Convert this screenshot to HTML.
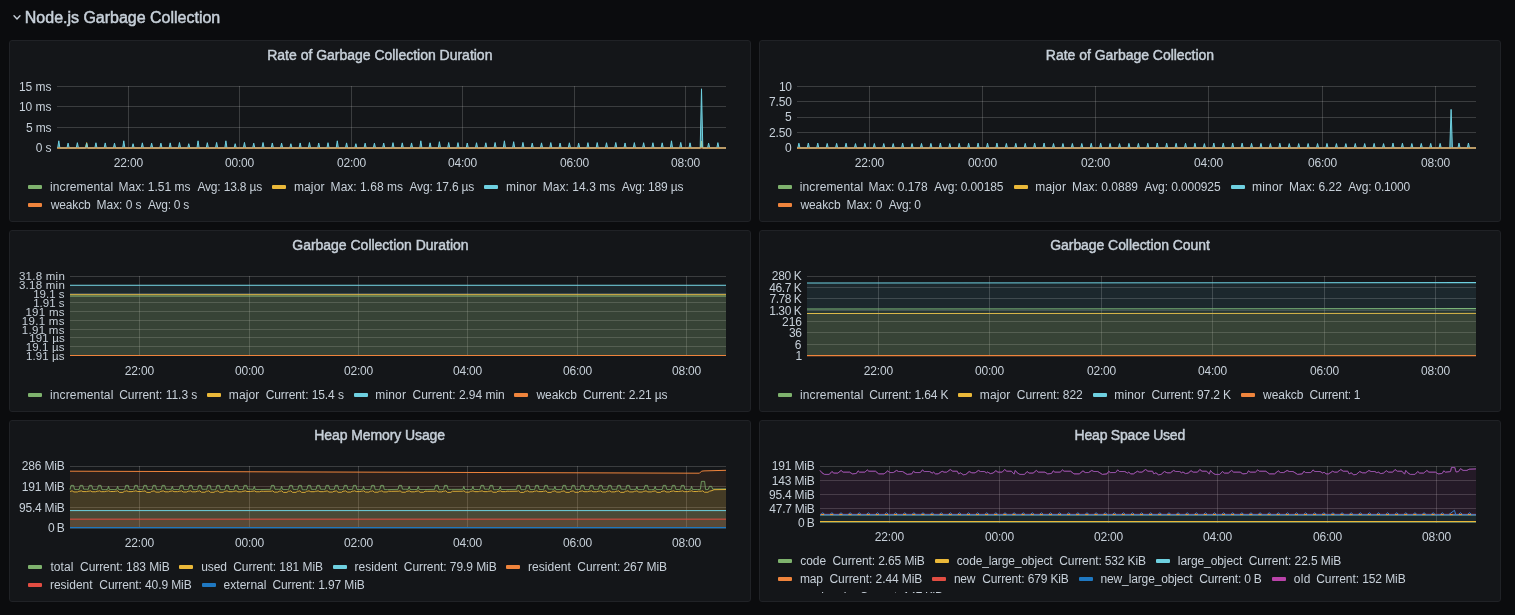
<!DOCTYPE html><html lang="en"><head><meta charset="utf-8"><title>Node.js Garbage Collection</title><style>
html,body{margin:0;padding:0}
body{width:1515px;height:615px;background:#0b0c0e;position:relative;overflow:hidden;font-family:"Liberation Sans",Arial,sans-serif;color:#c7d0d9}
.row{position:absolute;left:0;top:0;width:1515px;height:36px;will-change:transform}
.panel{position:absolute;box-sizing:border-box;width:742px;height:182px;background:#141619;border:1px solid #202226;border-radius:3px;will-change:transform}
.t,.ts,.h,.rt{position:absolute;white-space:pre;display:block;margin:0;font-weight:400}
.t{font-size:12px;line-height:12px;height:12px}
.ts{font-size:11.5px;line-height:12px;height:12px}
.h{font-size:14px;line-height:14px;height:14px;-webkit-text-stroke:0.45px #c7d0d9}
.rt{font-size:16px;line-height:16px;height:16px;-webkit-text-stroke:0.5px #c7d0d9}
.ic{position:absolute;width:14px;height:4px;border-radius:1px}
svg{position:absolute;left:0;top:0;overflow:hidden}
.axis,.legend,.series{display:contents}
.clip{position:absolute;left:0;top:165px;width:740px;height:6.6px;overflow:hidden}
</style></head><body>
<div class="row"><svg width="30" height="36" viewBox="0 0 30 36"><polyline points="14,15.8 17,18.9 20,15.8" fill="none" stroke="#c7d0d9" stroke-width="1.4" stroke-linecap="round" stroke-linejoin="round"/></svg><div class="rt" style="left:24.83px;top:9.66px;letter-spacing:-0.011px">Node.js Garbage Collection</div></div>
<section class="panel" style="left:9px;top:40px">
<h2 class="h" style="left:257.25px;top:7.35px;letter-spacing:-0.015px">Rate of Garbage Collection Duration</h2>
<svg class="plot" width="740" height="180" viewBox="10 41 740 180">
<rect x="57" y="86" width="669" height="1" fill="rgba(200,200,200,0.22)"/>
<rect x="57" y="106" width="669" height="1" fill="rgba(200,200,200,0.22)"/>
<rect x="57" y="127" width="669" height="1" fill="rgba(200,200,200,0.22)"/>
<rect x="57" y="147" width="669" height="1" fill="rgba(200,200,200,0.22)"/>
<rect x="128" y="86" width="1" height="62" fill="rgba(200,200,200,0.22)"/>
<rect x="239" y="86" width="1" height="62" fill="rgba(200,200,200,0.22)"/>
<rect x="351" y="86" width="1" height="62" fill="rgba(200,200,200,0.22)"/>
<rect x="462" y="86" width="1" height="62" fill="rgba(200,200,200,0.22)"/>
<rect x="574" y="86" width="1" height="62" fill="rgba(200,200,200,0.22)"/>
<rect x="685" y="86" width="1" height="62" fill="rgba(200,200,200,0.22)"/>
<polygon points="57.30,148.00 700.40,148.00 701.50,141.80 701.50,141.80 702.60,148.00 726.00,148.00 726.00,148.00 57.30,148.00" fill="#7EB26D" fill-opacity="0.6"/>
<polyline points="57.30,148.00 700.40,148.00 701.50,141.80 701.50,141.80 702.60,148.00 726.00,148.00" fill="none" stroke="#7EB26D" stroke-width="1" stroke-linejoin="round"/>
<polygon points="57.30,148.00 85.55,148.00 86.65,142.60 86.65,142.60 87.75,148.00 700.40,148.00 701.50,141.10 701.50,141.10 702.60,148.00 726.00,148.00 726.00,148.00 57.30,148.00" fill="#EAB839" fill-opacity="0.6"/>
<polyline points="57.30,148.00 85.55,148.00 86.65,142.60 86.65,142.60 87.75,148.00 700.40,148.00 701.50,141.10 701.50,141.10 702.60,148.00 726.00,148.00" fill="none" stroke="#EAB839" stroke-width="1" stroke-linejoin="round"/>
<polygon points="57.30,148.00 57.70,148.00 58.80,140.80 58.80,140.80 59.90,148.00 66.98,148.00 68.08,143.08 68.08,143.08 69.18,148.00 76.27,148.00 77.37,142.68 77.37,142.68 78.47,148.00 85.55,148.00 86.65,143.14 86.65,143.14 87.75,148.00 94.83,148.00 95.93,142.77 95.93,142.77 97.03,148.00 104.12,148.00 105.22,142.91 105.22,142.91 106.31,148.00 113.40,148.00 114.50,143.15 114.50,143.15 115.60,148.00 122.68,148.00 123.78,140.80 123.78,140.80 124.88,148.00 131.96,148.00 133.06,143.70 133.06,143.70 134.16,148.00 141.25,148.00 142.35,142.85 142.35,142.85 143.45,148.00 150.53,148.00 151.63,143.14 151.63,143.14 152.73,148.00 159.81,148.00 160.91,143.13 160.91,143.13 162.01,148.00 169.10,148.00 170.20,142.86 170.20,142.86 171.30,148.00 178.38,148.00 179.48,142.54 179.48,142.54 180.58,148.00 187.66,148.00 188.76,143.70 188.76,143.70 189.86,148.00 196.95,148.00 198.05,140.80 198.05,140.80 199.15,148.00 206.23,148.00 207.33,142.70 207.33,142.70 208.43,148.00 215.51,148.00 216.61,142.44 216.61,142.44 217.71,148.00 224.79,148.00 225.89,140.80 225.89,140.80 226.99,148.00 234.08,148.00 235.18,143.70 235.18,143.70 236.28,148.00 243.36,148.00 244.46,142.42 244.46,142.42 245.56,148.00 252.64,148.00 253.74,143.16 253.74,143.16 254.84,148.00 261.93,148.00 263.03,142.51 263.03,142.51 264.13,148.00 271.21,148.00 272.31,142.97 272.31,142.97 273.41,148.00 280.49,148.00 281.59,143.08 281.59,143.08 282.69,148.00 289.77,148.00 290.88,143.70 290.88,143.70 291.98,148.00 299.06,148.00 300.16,142.95 300.16,142.95 301.26,148.00 308.34,148.00 309.44,142.55 309.44,142.55 310.54,148.00 317.62,148.00 318.72,143.06 318.72,143.06 319.82,148.00 326.91,148.00 328.01,142.73 328.01,142.73 329.11,148.00 336.19,148.00 337.29,140.80 337.29,140.80 338.39,148.00 345.47,148.00 346.57,142.90 346.57,142.90 347.67,148.00 354.76,148.00 355.86,143.70 355.86,143.70 356.96,148.00 364.04,148.00 365.14,143.15 365.14,143.15 366.24,148.00 373.32,148.00 374.42,143.15 374.42,143.15 375.52,148.00 382.60,148.00 383.70,143.04 383.70,143.04 384.81,148.00 391.89,148.00 392.99,142.66 392.99,142.66 394.09,148.00 401.17,148.00 402.27,142.86 402.27,142.86 403.37,148.00 410.45,148.00 411.55,142.95 411.55,142.95 412.65,148.00 419.74,148.00 420.84,140.80 420.84,140.80 421.94,148.00 429.02,148.00 430.12,142.84 430.12,142.84 431.22,148.00 438.30,148.00 439.40,141.70 439.40,141.70 440.50,148.00 447.59,148.00 448.69,142.56 448.69,142.56 449.79,148.00 456.87,148.00 457.97,142.64 457.97,142.64 459.07,148.00 466.15,148.00 467.25,143.00 467.25,143.00 468.35,148.00 475.43,148.00 476.53,142.74 476.53,142.74 477.63,148.00 484.72,148.00 485.82,142.78 485.82,142.78 486.92,148.00 494.00,148.00 495.10,142.50 495.10,142.50 496.20,148.00 503.28,148.00 504.38,140.80 504.38,140.80 505.48,148.00 512.57,148.00 513.67,141.70 513.67,141.70 514.77,148.00 521.85,148.00 522.95,142.42 522.95,142.42 524.05,148.00 531.13,148.00 532.23,143.11 532.23,143.11 533.33,148.00 540.42,148.00 541.52,142.87 541.52,142.87 542.62,148.00 549.70,148.00 550.80,142.59 550.80,142.59 551.90,148.00 558.98,148.00 560.08,143.08 560.08,143.08 561.18,148.00 568.26,148.00 569.37,142.81 569.37,142.81 570.47,148.00 577.55,148.00 578.65,143.17 578.65,143.17 579.75,148.00 586.83,148.00 587.93,142.67 587.93,142.67 589.03,148.00 596.11,148.00 597.21,142.59 597.21,142.59 598.31,148.00 605.40,148.00 606.50,142.74 606.50,142.74 607.60,148.00 614.68,148.00 615.78,142.50 615.78,142.50 616.88,148.00 623.96,148.00 625.06,142.95 625.06,142.95 626.16,148.00 633.25,148.00 634.35,142.64 634.35,142.64 635.45,148.00 642.53,148.00 643.63,142.72 643.63,142.72 644.73,148.00 651.81,148.00 652.91,142.74 652.91,142.74 654.01,148.00 661.09,148.00 662.19,142.84 662.19,142.84 663.29,148.00 670.38,148.00 671.48,140.80 671.48,140.80 672.58,148.00 679.66,148.00 680.76,142.44 680.76,142.44 681.86,148.00 688.94,148.00 690.04,142.82 690.04,142.82 691.14,148.00 698.23,148.00 699.33,148.00 699.33,148.00 700.43,148.00 700.20,148.00 701.50,88.80 701.50,88.80 702.80,148.00 707.51,148.00 708.61,143.15 708.61,143.15 709.71,148.00 716.79,148.00 717.89,142.64 717.89,142.64 718.99,148.00 726.00,148.00 726.00,148.00 57.30,148.00" fill="#6ED0E0" fill-opacity="0.6"/>
<polyline points="57.30,148.00 57.70,148.00 58.80,140.80 58.80,140.80 59.90,148.00 66.98,148.00 68.08,143.08 68.08,143.08 69.18,148.00 76.27,148.00 77.37,142.68 77.37,142.68 78.47,148.00 85.55,148.00 86.65,143.14 86.65,143.14 87.75,148.00 94.83,148.00 95.93,142.77 95.93,142.77 97.03,148.00 104.12,148.00 105.22,142.91 105.22,142.91 106.31,148.00 113.40,148.00 114.50,143.15 114.50,143.15 115.60,148.00 122.68,148.00 123.78,140.80 123.78,140.80 124.88,148.00 131.96,148.00 133.06,143.70 133.06,143.70 134.16,148.00 141.25,148.00 142.35,142.85 142.35,142.85 143.45,148.00 150.53,148.00 151.63,143.14 151.63,143.14 152.73,148.00 159.81,148.00 160.91,143.13 160.91,143.13 162.01,148.00 169.10,148.00 170.20,142.86 170.20,142.86 171.30,148.00 178.38,148.00 179.48,142.54 179.48,142.54 180.58,148.00 187.66,148.00 188.76,143.70 188.76,143.70 189.86,148.00 196.95,148.00 198.05,140.80 198.05,140.80 199.15,148.00 206.23,148.00 207.33,142.70 207.33,142.70 208.43,148.00 215.51,148.00 216.61,142.44 216.61,142.44 217.71,148.00 224.79,148.00 225.89,140.80 225.89,140.80 226.99,148.00 234.08,148.00 235.18,143.70 235.18,143.70 236.28,148.00 243.36,148.00 244.46,142.42 244.46,142.42 245.56,148.00 252.64,148.00 253.74,143.16 253.74,143.16 254.84,148.00 261.93,148.00 263.03,142.51 263.03,142.51 264.13,148.00 271.21,148.00 272.31,142.97 272.31,142.97 273.41,148.00 280.49,148.00 281.59,143.08 281.59,143.08 282.69,148.00 289.77,148.00 290.88,143.70 290.88,143.70 291.98,148.00 299.06,148.00 300.16,142.95 300.16,142.95 301.26,148.00 308.34,148.00 309.44,142.55 309.44,142.55 310.54,148.00 317.62,148.00 318.72,143.06 318.72,143.06 319.82,148.00 326.91,148.00 328.01,142.73 328.01,142.73 329.11,148.00 336.19,148.00 337.29,140.80 337.29,140.80 338.39,148.00 345.47,148.00 346.57,142.90 346.57,142.90 347.67,148.00 354.76,148.00 355.86,143.70 355.86,143.70 356.96,148.00 364.04,148.00 365.14,143.15 365.14,143.15 366.24,148.00 373.32,148.00 374.42,143.15 374.42,143.15 375.52,148.00 382.60,148.00 383.70,143.04 383.70,143.04 384.81,148.00 391.89,148.00 392.99,142.66 392.99,142.66 394.09,148.00 401.17,148.00 402.27,142.86 402.27,142.86 403.37,148.00 410.45,148.00 411.55,142.95 411.55,142.95 412.65,148.00 419.74,148.00 420.84,140.80 420.84,140.80 421.94,148.00 429.02,148.00 430.12,142.84 430.12,142.84 431.22,148.00 438.30,148.00 439.40,141.70 439.40,141.70 440.50,148.00 447.59,148.00 448.69,142.56 448.69,142.56 449.79,148.00 456.87,148.00 457.97,142.64 457.97,142.64 459.07,148.00 466.15,148.00 467.25,143.00 467.25,143.00 468.35,148.00 475.43,148.00 476.53,142.74 476.53,142.74 477.63,148.00 484.72,148.00 485.82,142.78 485.82,142.78 486.92,148.00 494.00,148.00 495.10,142.50 495.10,142.50 496.20,148.00 503.28,148.00 504.38,140.80 504.38,140.80 505.48,148.00 512.57,148.00 513.67,141.70 513.67,141.70 514.77,148.00 521.85,148.00 522.95,142.42 522.95,142.42 524.05,148.00 531.13,148.00 532.23,143.11 532.23,143.11 533.33,148.00 540.42,148.00 541.52,142.87 541.52,142.87 542.62,148.00 549.70,148.00 550.80,142.59 550.80,142.59 551.90,148.00 558.98,148.00 560.08,143.08 560.08,143.08 561.18,148.00 568.26,148.00 569.37,142.81 569.37,142.81 570.47,148.00 577.55,148.00 578.65,143.17 578.65,143.17 579.75,148.00 586.83,148.00 587.93,142.67 587.93,142.67 589.03,148.00 596.11,148.00 597.21,142.59 597.21,142.59 598.31,148.00 605.40,148.00 606.50,142.74 606.50,142.74 607.60,148.00 614.68,148.00 615.78,142.50 615.78,142.50 616.88,148.00 623.96,148.00 625.06,142.95 625.06,142.95 626.16,148.00 633.25,148.00 634.35,142.64 634.35,142.64 635.45,148.00 642.53,148.00 643.63,142.72 643.63,142.72 644.73,148.00 651.81,148.00 652.91,142.74 652.91,142.74 654.01,148.00 661.09,148.00 662.19,142.84 662.19,142.84 663.29,148.00 670.38,148.00 671.48,140.80 671.48,140.80 672.58,148.00 679.66,148.00 680.76,142.44 680.76,142.44 681.86,148.00 688.94,148.00 690.04,142.82 690.04,142.82 691.14,148.00 698.23,148.00 699.33,148.00 699.33,148.00 700.43,148.00 700.20,148.00 701.50,88.80 701.50,88.80 702.80,148.00 707.51,148.00 708.61,143.15 708.61,143.15 709.71,148.00 716.79,148.00 717.89,142.64 717.89,142.64 718.99,148.00 726.00,148.00" fill="none" stroke="#6ED0E0" stroke-width="1" stroke-linejoin="round"/>
<polyline points="57.30,148.00 726.00,148.00" fill="none" stroke="#EF843C" stroke-width="1" stroke-linejoin="round"/>
</svg>
<div class="axis y"><span class="t" style="left:8.90px;top:40.04px;letter-spacing:-0.017px">15 ms</span><span class="t" style="left:8.90px;top:60.04px;letter-spacing:-0.017px">10 ms</span><span class="t" style="left:16.01px;top:81.04px;letter-spacing:-0.167px">5 ms</span><span class="t" style="left:25.82px;top:101.04px;letter-spacing:-0.155px">0 s</span></div>
<div class="axis x"><span class="t" style="left:103.81px;top:116.04px;letter-spacing:-0.171px">22:00</span><span class="t" style="left:214.97px;top:116.04px;letter-spacing:-0.211px">00:00</span><span class="t" style="left:326.97px;top:116.04px;letter-spacing:-0.211px">02:00</span><span class="t" style="left:437.97px;top:116.04px;letter-spacing:-0.211px">04:00</span><span class="t" style="left:549.97px;top:116.04px;letter-spacing:-0.211px">06:00</span><span class="t" style="left:660.97px;top:116.04px;letter-spacing:-0.211px">08:00</span></div>
<div class="legend">
<div class="series"><i class="ic" style="left:18px;top:144px;background:#7EB26D"></i><span class="t alias" style="left:40.04px;top:140.04px;letter-spacing:0.116px">incremental</span><span class="t value" style="left:108.60px;top:140.04px;letter-spacing:-0.017px">Max: 1.51 ms</span><span class="t value" style="left:187.40px;top:140.04px;letter-spacing:-0.170px">Avg: 13.8 µs</span></div>
<div class="series"><i class="ic" style="left:262px;top:144px;background:#EAB839"></i><span class="t alias" style="left:284.00px;top:140.04px;letter-spacing:0.100px">major</span><span class="t value" style="left:320.60px;top:140.04px;letter-spacing:0.037px">Max: 1.68 ms</span><span class="t value" style="left:399.50px;top:140.04px;letter-spacing:-0.170px">Avg: 17.6 µs</span></div>
<div class="series"><i class="ic" style="left:474px;top:144px;background:#6ED0E0"></i><span class="t alias" style="left:496.10px;top:140.04px;letter-spacing:0.100px">minor</span><span class="t value" style="left:532.70px;top:140.04px;letter-spacing:0.055px">Max: 14.3 ms</span><span class="t value" style="left:611.80px;top:140.04px;letter-spacing:-0.170px">Avg: 189 µs</span></div>
<div class="series"><i class="ic" style="left:18px;top:162px;background:#EF843C"></i><span class="t alias" style="left:40.70px;top:158.04px;letter-spacing:-0.130px">weakcb</span><span class="t value" style="left:86.60px;top:158.04px;letter-spacing:-0.054px">Max: 0 s</span><span class="t value" style="left:138.10px;top:158.04px;letter-spacing:-0.297px">Avg: 0 s</span></div>
</div>
</section>
<section class="panel" style="left:759px;top:40px">
<h2 class="h" style="left:285.80px;top:7.35px;letter-spacing:-0.024px">Rate of Garbage Collection</h2>
<svg class="plot" width="740" height="180" viewBox="760 41 740 180">
<rect x="797" y="86" width="679" height="1" fill="rgba(200,200,200,0.22)"/>
<rect x="797" y="101" width="679" height="1" fill="rgba(200,200,200,0.22)"/>
<rect x="797" y="117" width="679" height="1" fill="rgba(200,200,200,0.22)"/>
<rect x="797" y="132" width="679" height="1" fill="rgba(200,200,200,0.22)"/>
<rect x="797" y="147" width="679" height="1" fill="rgba(200,200,200,0.22)"/>
<rect x="869" y="86" width="1" height="62" fill="rgba(200,200,200,0.22)"/>
<rect x="982" y="86" width="1" height="62" fill="rgba(200,200,200,0.22)"/>
<rect x="1095" y="86" width="1" height="62" fill="rgba(200,200,200,0.22)"/>
<rect x="1208" y="86" width="1" height="62" fill="rgba(200,200,200,0.22)"/>
<rect x="1322" y="86" width="1" height="62" fill="rgba(200,200,200,0.22)"/>
<rect x="1435" y="86" width="1" height="62" fill="rgba(200,200,200,0.22)"/>
<polyline points="797.00,148.00 1476.00,148.00" fill="none" stroke="#7EB26D" stroke-width="1" stroke-linejoin="round"/>
<polyline points="797.00,148.00 1476.00,148.00" fill="none" stroke="#EAB839" stroke-width="1" stroke-linejoin="round"/>
<polygon points="797.00,148.00 797.80,148.00 798.90,143.21 798.90,143.21 800.00,148.00 807.23,148.00 808.33,143.00 808.33,143.00 809.43,148.00 816.66,148.00 817.76,143.11 817.76,143.11 818.86,148.00 826.09,148.00 827.19,143.43 827.19,143.43 828.29,148.00 835.52,148.00 836.62,143.37 836.62,143.37 837.72,148.00 844.95,148.00 846.05,143.20 846.05,143.20 847.15,148.00 854.38,148.00 855.48,143.59 855.48,143.59 856.58,148.00 863.81,148.00 864.91,143.32 864.91,143.32 866.01,148.00 873.24,148.00 874.34,143.50 874.34,143.50 875.44,148.00 882.67,148.00 883.77,143.53 883.77,143.53 884.87,148.00 892.10,148.00 893.20,143.56 893.20,143.56 894.30,148.00 901.53,148.00 902.63,143.14 902.63,143.14 903.73,148.00 910.96,148.00 912.06,143.52 912.06,143.52 913.16,148.00 920.39,148.00 921.49,143.45 921.49,143.45 922.59,148.00 929.82,148.00 930.92,143.37 930.92,143.37 932.02,148.00 939.25,148.00 940.35,143.08 940.35,143.08 941.45,148.00 948.68,148.00 949.78,143.55 949.78,143.55 950.88,148.00 958.11,148.00 959.21,143.33 959.21,143.33 960.31,148.00 967.54,148.00 968.64,143.27 968.64,143.27 969.74,148.00 976.97,148.00 978.07,143.07 978.07,143.07 979.17,148.00 986.40,148.00 987.50,143.11 987.50,143.11 988.60,148.00 995.83,148.00 996.93,143.08 996.93,143.08 998.03,148.00 1005.26,148.00 1006.36,143.43 1006.36,143.43 1007.46,148.00 1014.69,148.00 1015.79,143.35 1015.79,143.35 1016.89,148.00 1024.12,148.00 1025.22,143.38 1025.22,143.38 1026.32,148.00 1033.55,148.00 1034.65,143.07 1034.65,143.07 1035.75,148.00 1042.98,148.00 1044.08,143.03 1044.08,143.03 1045.18,148.00 1052.41,148.00 1053.51,143.51 1053.51,143.51 1054.61,148.00 1061.84,148.00 1062.94,143.49 1062.94,143.49 1064.04,148.00 1071.27,148.00 1072.37,143.46 1072.37,143.46 1073.47,148.00 1080.70,148.00 1081.80,143.46 1081.80,143.46 1082.90,148.00 1090.13,148.00 1091.23,143.31 1091.23,143.31 1092.33,148.00 1099.56,148.00 1100.66,143.25 1100.66,143.25 1101.76,148.00 1108.99,148.00 1110.09,143.44 1110.09,143.44 1111.19,148.00 1118.42,148.00 1119.52,143.60 1119.52,143.60 1120.62,148.00 1127.85,148.00 1128.95,143.35 1128.95,143.35 1130.05,148.00 1137.28,148.00 1138.38,143.38 1138.38,143.38 1139.48,148.00 1146.71,148.00 1147.81,143.26 1147.81,143.26 1148.91,148.00 1156.14,148.00 1157.24,143.03 1157.24,143.03 1158.34,148.00 1165.57,148.00 1166.67,143.19 1166.67,143.19 1167.77,148.00 1175.00,148.00 1176.10,143.29 1176.10,143.29 1177.20,148.00 1184.43,148.00 1185.53,143.23 1185.53,143.23 1186.63,148.00 1193.86,148.00 1194.96,143.19 1194.96,143.19 1196.06,148.00 1203.29,148.00 1204.39,143.57 1204.39,143.57 1205.49,148.00 1212.72,148.00 1213.82,143.06 1213.82,143.06 1214.92,148.00 1222.15,148.00 1223.25,143.13 1223.25,143.13 1224.35,148.00 1231.58,148.00 1232.68,143.08 1232.68,143.08 1233.78,148.00 1241.01,148.00 1242.11,143.12 1242.11,143.12 1243.21,148.00 1250.44,148.00 1251.54,143.36 1251.54,143.36 1252.64,148.00 1259.87,148.00 1260.97,143.36 1260.97,143.36 1262.07,148.00 1269.30,148.00 1270.40,143.54 1270.40,143.54 1271.50,148.00 1278.73,148.00 1279.83,143.22 1279.83,143.22 1280.93,148.00 1288.16,148.00 1289.26,143.56 1289.26,143.56 1290.36,148.00 1297.59,148.00 1298.69,143.56 1298.69,143.56 1299.79,148.00 1307.02,148.00 1308.12,143.47 1308.12,143.47 1309.22,148.00 1316.45,148.00 1317.55,143.50 1317.55,143.50 1318.65,148.00 1325.88,148.00 1326.98,143.40 1326.98,143.40 1328.08,148.00 1335.31,148.00 1336.41,143.57 1336.41,143.57 1337.51,148.00 1344.74,148.00 1345.84,143.60 1345.84,143.60 1346.94,148.00 1354.17,148.00 1355.27,143.51 1355.27,143.51 1356.37,148.00 1363.60,148.00 1364.70,143.54 1364.70,143.54 1365.80,148.00 1373.03,148.00 1374.13,143.38 1374.13,143.38 1375.23,148.00 1382.46,148.00 1383.56,143.58 1383.56,143.58 1384.66,148.00 1391.89,148.00 1392.99,143.08 1392.99,143.08 1394.09,148.00 1401.32,148.00 1402.42,143.23 1402.42,143.23 1403.52,148.00 1410.75,148.00 1411.85,143.51 1411.85,143.51 1412.95,148.00 1420.18,148.00 1421.28,143.45 1421.28,143.45 1422.38,148.00 1429.61,148.00 1430.71,143.39 1430.71,143.39 1431.81,148.00 1439.04,148.00 1440.14,143.38 1440.14,143.38 1441.24,148.00 1448.47,148.00 1449.57,148.00 1449.57,148.00 1450.67,148.00 1449.80,148.00 1451.10,109.40 1451.10,109.40 1452.40,148.00 1457.90,148.00 1459.00,143.09 1459.00,143.09 1460.10,148.00 1467.33,148.00 1468.43,143.00 1468.43,143.00 1469.53,148.00 1476.00,148.00 1476.00,148.00 797.00,148.00" fill="#6ED0E0" fill-opacity="0.6"/>
<polyline points="797.00,148.00 797.80,148.00 798.90,143.21 798.90,143.21 800.00,148.00 807.23,148.00 808.33,143.00 808.33,143.00 809.43,148.00 816.66,148.00 817.76,143.11 817.76,143.11 818.86,148.00 826.09,148.00 827.19,143.43 827.19,143.43 828.29,148.00 835.52,148.00 836.62,143.37 836.62,143.37 837.72,148.00 844.95,148.00 846.05,143.20 846.05,143.20 847.15,148.00 854.38,148.00 855.48,143.59 855.48,143.59 856.58,148.00 863.81,148.00 864.91,143.32 864.91,143.32 866.01,148.00 873.24,148.00 874.34,143.50 874.34,143.50 875.44,148.00 882.67,148.00 883.77,143.53 883.77,143.53 884.87,148.00 892.10,148.00 893.20,143.56 893.20,143.56 894.30,148.00 901.53,148.00 902.63,143.14 902.63,143.14 903.73,148.00 910.96,148.00 912.06,143.52 912.06,143.52 913.16,148.00 920.39,148.00 921.49,143.45 921.49,143.45 922.59,148.00 929.82,148.00 930.92,143.37 930.92,143.37 932.02,148.00 939.25,148.00 940.35,143.08 940.35,143.08 941.45,148.00 948.68,148.00 949.78,143.55 949.78,143.55 950.88,148.00 958.11,148.00 959.21,143.33 959.21,143.33 960.31,148.00 967.54,148.00 968.64,143.27 968.64,143.27 969.74,148.00 976.97,148.00 978.07,143.07 978.07,143.07 979.17,148.00 986.40,148.00 987.50,143.11 987.50,143.11 988.60,148.00 995.83,148.00 996.93,143.08 996.93,143.08 998.03,148.00 1005.26,148.00 1006.36,143.43 1006.36,143.43 1007.46,148.00 1014.69,148.00 1015.79,143.35 1015.79,143.35 1016.89,148.00 1024.12,148.00 1025.22,143.38 1025.22,143.38 1026.32,148.00 1033.55,148.00 1034.65,143.07 1034.65,143.07 1035.75,148.00 1042.98,148.00 1044.08,143.03 1044.08,143.03 1045.18,148.00 1052.41,148.00 1053.51,143.51 1053.51,143.51 1054.61,148.00 1061.84,148.00 1062.94,143.49 1062.94,143.49 1064.04,148.00 1071.27,148.00 1072.37,143.46 1072.37,143.46 1073.47,148.00 1080.70,148.00 1081.80,143.46 1081.80,143.46 1082.90,148.00 1090.13,148.00 1091.23,143.31 1091.23,143.31 1092.33,148.00 1099.56,148.00 1100.66,143.25 1100.66,143.25 1101.76,148.00 1108.99,148.00 1110.09,143.44 1110.09,143.44 1111.19,148.00 1118.42,148.00 1119.52,143.60 1119.52,143.60 1120.62,148.00 1127.85,148.00 1128.95,143.35 1128.95,143.35 1130.05,148.00 1137.28,148.00 1138.38,143.38 1138.38,143.38 1139.48,148.00 1146.71,148.00 1147.81,143.26 1147.81,143.26 1148.91,148.00 1156.14,148.00 1157.24,143.03 1157.24,143.03 1158.34,148.00 1165.57,148.00 1166.67,143.19 1166.67,143.19 1167.77,148.00 1175.00,148.00 1176.10,143.29 1176.10,143.29 1177.20,148.00 1184.43,148.00 1185.53,143.23 1185.53,143.23 1186.63,148.00 1193.86,148.00 1194.96,143.19 1194.96,143.19 1196.06,148.00 1203.29,148.00 1204.39,143.57 1204.39,143.57 1205.49,148.00 1212.72,148.00 1213.82,143.06 1213.82,143.06 1214.92,148.00 1222.15,148.00 1223.25,143.13 1223.25,143.13 1224.35,148.00 1231.58,148.00 1232.68,143.08 1232.68,143.08 1233.78,148.00 1241.01,148.00 1242.11,143.12 1242.11,143.12 1243.21,148.00 1250.44,148.00 1251.54,143.36 1251.54,143.36 1252.64,148.00 1259.87,148.00 1260.97,143.36 1260.97,143.36 1262.07,148.00 1269.30,148.00 1270.40,143.54 1270.40,143.54 1271.50,148.00 1278.73,148.00 1279.83,143.22 1279.83,143.22 1280.93,148.00 1288.16,148.00 1289.26,143.56 1289.26,143.56 1290.36,148.00 1297.59,148.00 1298.69,143.56 1298.69,143.56 1299.79,148.00 1307.02,148.00 1308.12,143.47 1308.12,143.47 1309.22,148.00 1316.45,148.00 1317.55,143.50 1317.55,143.50 1318.65,148.00 1325.88,148.00 1326.98,143.40 1326.98,143.40 1328.08,148.00 1335.31,148.00 1336.41,143.57 1336.41,143.57 1337.51,148.00 1344.74,148.00 1345.84,143.60 1345.84,143.60 1346.94,148.00 1354.17,148.00 1355.27,143.51 1355.27,143.51 1356.37,148.00 1363.60,148.00 1364.70,143.54 1364.70,143.54 1365.80,148.00 1373.03,148.00 1374.13,143.38 1374.13,143.38 1375.23,148.00 1382.46,148.00 1383.56,143.58 1383.56,143.58 1384.66,148.00 1391.89,148.00 1392.99,143.08 1392.99,143.08 1394.09,148.00 1401.32,148.00 1402.42,143.23 1402.42,143.23 1403.52,148.00 1410.75,148.00 1411.85,143.51 1411.85,143.51 1412.95,148.00 1420.18,148.00 1421.28,143.45 1421.28,143.45 1422.38,148.00 1429.61,148.00 1430.71,143.39 1430.71,143.39 1431.81,148.00 1439.04,148.00 1440.14,143.38 1440.14,143.38 1441.24,148.00 1448.47,148.00 1449.57,148.00 1449.57,148.00 1450.67,148.00 1449.80,148.00 1451.10,109.40 1451.10,109.40 1452.40,148.00 1457.90,148.00 1459.00,143.09 1459.00,143.09 1460.10,148.00 1467.33,148.00 1468.43,143.00 1468.43,143.00 1469.53,148.00 1476.00,148.00" fill="none" stroke="#6ED0E0" stroke-width="1" stroke-linejoin="round"/>
<polyline points="797.00,148.00 1476.00,148.00" fill="none" stroke="#EF843C" stroke-width="1" stroke-linejoin="round"/>
</svg>
<div class="axis y"><span class="t" style="left:18.90px;top:40.04px;letter-spacing:-0.200px">10</span><span class="t" style="left:8.98px;top:55.04px;letter-spacing:-0.093px">7.50</span><span class="t" style="left:25.01px;top:70.04px;letter-spacing:0.000px">5</span><span class="t" style="left:8.96px;top:86.04px;letter-spacing:-0.087px">2.50</span><span class="t" style="left:25.02px;top:101.04px;letter-spacing:0.000px">0</span></div>
<div class="axis x"><span class="t" style="left:94.81px;top:116.04px;letter-spacing:-0.171px">22:00</span><span class="t" style="left:207.97px;top:116.04px;letter-spacing:-0.211px">00:00</span><span class="t" style="left:320.97px;top:116.04px;letter-spacing:-0.211px">02:00</span><span class="t" style="left:433.97px;top:116.04px;letter-spacing:-0.211px">04:00</span><span class="t" style="left:547.97px;top:116.04px;letter-spacing:-0.211px">06:00</span><span class="t" style="left:660.97px;top:116.04px;letter-spacing:-0.211px">08:00</span></div>
<div class="legend">
<div class="series"><i class="ic" style="left:18px;top:144px;background:#7EB26D"></i><span class="t alias" style="left:39.74px;top:140.04px;letter-spacing:0.147px">incremental</span><span class="t value" style="left:108.50px;top:140.04px;letter-spacing:-0.022px">Max: 0.178</span><span class="t value" style="left:174.30px;top:140.04px;letter-spacing:-0.127px">Avg: 0.00185</span></div>
<div class="series"><i class="ic" style="left:254px;top:144px;background:#EAB839"></i><span class="t alias" style="left:275.30px;top:140.04px;letter-spacing:0.150px">major</span><span class="t value" style="left:311.90px;top:140.04px;letter-spacing:0.011px">Max: 0.0889</span><span class="t value" style="left:384.50px;top:140.04px;letter-spacing:-0.094px">Avg: 0.000925</span></div>
<div class="series"><i class="ic" style="left:471px;top:144px;background:#6ED0E0"></i><span class="t alias" style="left:492.10px;top:140.04px;letter-spacing:0.150px">minor</span><span class="t value" style="left:528.90px;top:140.04px;letter-spacing:0.037px">Max: 6.22</span><span class="t value" style="left:588.20px;top:140.04px;letter-spacing:-0.173px">Avg: 0.1000</span></div>
<div class="series"><i class="ic" style="left:18px;top:162px;background:#EF843C"></i><span class="t alias" style="left:40.40px;top:158.04px;letter-spacing:-0.090px">weakcb</span><span class="t value" style="left:86.50px;top:158.04px;letter-spacing:-0.025px">Max: 0</span><span class="t value" style="left:128.80px;top:158.04px;letter-spacing:-0.325px">Avg: 0</span></div>
</div>
</section>
<section class="panel" style="left:9px;top:230px">
<h2 class="h" style="left:282.25px;top:7.35px;letter-spacing:-0.014px">Garbage Collection Duration</h2>
<svg class="plot" width="740" height="180" viewBox="10 231 740 180">
<rect x="70" y="276" width="656" height="1" fill="rgba(200,200,200,0.22)"/>
<rect x="70" y="285" width="656" height="1" fill="rgba(200,200,200,0.22)"/>
<rect x="70" y="293" width="656" height="1" fill="rgba(200,200,200,0.22)"/>
<rect x="70" y="302" width="656" height="1" fill="rgba(200,200,200,0.22)"/>
<rect x="70" y="311" width="656" height="1" fill="rgba(200,200,200,0.22)"/>
<rect x="70" y="320" width="656" height="1" fill="rgba(200,200,200,0.22)"/>
<rect x="70" y="329" width="656" height="1" fill="rgba(200,200,200,0.22)"/>
<rect x="70" y="337" width="656" height="1" fill="rgba(200,200,200,0.22)"/>
<rect x="70" y="346" width="656" height="1" fill="rgba(200,200,200,0.22)"/>
<rect x="70" y="355" width="656" height="1" fill="rgba(200,200,200,0.22)"/>
<rect x="139" y="276" width="1" height="80" fill="rgba(200,200,200,0.22)"/>
<rect x="249" y="276" width="1" height="80" fill="rgba(200,200,200,0.22)"/>
<rect x="358" y="276" width="1" height="80" fill="rgba(200,200,200,0.22)"/>
<rect x="467" y="276" width="1" height="80" fill="rgba(200,200,200,0.22)"/>
<rect x="577" y="276" width="1" height="80" fill="rgba(200,200,200,0.22)"/>
<rect x="686" y="276" width="1" height="80" fill="rgba(200,200,200,0.22)"/>
<polygon points="70.00,296.05 726.00,296.05 726.00,356.00 70.00,356.00" fill="#7EB26D" fill-opacity="0.1"/>
<polyline points="70.00,296.05 726.00,296.05" fill="none" stroke="#7EB26D" stroke-width="1" stroke-linejoin="round"/>
<polygon points="70.00,294.65 726.00,294.65 726.00,356.00 70.00,356.00" fill="#EAB839" fill-opacity="0.1"/>
<polyline points="70.00,294.65 726.00,294.65" fill="none" stroke="#EAB839" stroke-width="1" stroke-linejoin="round"/>
<polygon points="70.00,285.25 726.00,285.25 726.00,356.00 70.00,356.00" fill="#6ED0E0" fill-opacity="0.1"/>
<polyline points="70.00,285.25 726.00,285.25" fill="none" stroke="#6ED0E0" stroke-width="1.2" stroke-linejoin="round"/>
<polygon points="70.00,355.50 726.00,355.50 726.00,356.00 70.00,356.00" fill="#EF843C" fill-opacity="0.1"/>
<polyline points="70.00,355.50 726.00,355.50" fill="none" stroke="#EF843C" stroke-width="1" stroke-linejoin="round"/>
</svg>
<div class="axis y"><span class="ts" style="left:8.90px;top:39.21px;letter-spacing:0.256px">31.8 min</span><span class="ts" style="left:8.90px;top:48.21px;letter-spacing:0.256px">3.18 min</span><span class="ts" style="left:23.20px;top:57.21px;letter-spacing:0.020px">19.1 s</span><span class="ts" style="left:23.20px;top:66.21px;letter-spacing:0.020px">1.91 s</span><span class="ts" style="left:15.40px;top:75.21px;letter-spacing:0.299px">191 ms</span><span class="ts" style="left:11.80px;top:84.21px;letter-spacing:0.297px">19.1 ms</span><span class="ts" style="left:11.80px;top:93.21px;letter-spacing:0.297px">1.91 ms</span><span class="ts" style="left:19.20px;top:101.21px;letter-spacing:0.139px">191 µs</span><span class="ts" style="left:15.70px;top:110.21px;letter-spacing:0.147px">19.1 µs</span><span class="ts" style="left:15.90px;top:119.21px;letter-spacing:0.113px">1.91 µs</span></div>
<div class="axis x"><span class="t" style="left:114.81px;top:134.04px;letter-spacing:-0.171px">22:00</span><span class="t" style="left:224.97px;top:134.04px;letter-spacing:-0.211px">00:00</span><span class="t" style="left:333.97px;top:134.04px;letter-spacing:-0.211px">02:00</span><span class="t" style="left:442.97px;top:134.04px;letter-spacing:-0.211px">04:00</span><span class="t" style="left:552.97px;top:134.04px;letter-spacing:-0.211px">06:00</span><span class="t" style="left:661.97px;top:134.04px;letter-spacing:-0.211px">08:00</span></div>
<div class="legend">
<div class="series"><i class="ic" style="left:18px;top:162px;background:#7EB26D"></i><span class="t alias" style="left:39.94px;top:158.04px;letter-spacing:0.136px">incremental</span><span class="t value" style="left:109.14px;top:158.04px;letter-spacing:-0.017px">Current: 11.3 s</span></div>
<div class="series"><i class="ic" style="left:197px;top:162px;background:#EAB839"></i><span class="t alias" style="left:218.80px;top:158.04px;letter-spacing:0.125px">major</span><span class="t value" style="left:255.64px;top:158.04px;letter-spacing:-0.073px">Current: 15.4 s</span></div>
<div class="series"><i class="ic" style="left:344px;top:162px;background:#6ED0E0"></i><span class="t alias" style="left:365.20px;top:158.04px;letter-spacing:0.200px">minor</span><span class="t value" style="left:402.54px;top:158.04px;letter-spacing:-0.034px">Current: 2.94 min</span></div>
<div class="series"><i class="ic" style="left:504px;top:162px;background:#EF843C"></i><span class="t alias" style="left:526.40px;top:158.04px;letter-spacing:-0.030px">weakcb</span><span class="t value" style="left:573.04px;top:158.04px;letter-spacing:-0.115px">Current: 2.21 µs</span></div>
</div>
</section>
<section class="panel" style="left:759px;top:230px">
<h2 class="h" style="left:290.25px;top:7.35px;letter-spacing:-0.065px">Garbage Collection Count</h2>
<svg class="plot" width="740" height="180" viewBox="760 231 740 180">
<rect x="807" y="276" width="669" height="1" fill="rgba(200,200,200,0.22)"/>
<rect x="807" y="287" width="669" height="1" fill="rgba(200,200,200,0.22)"/>
<rect x="807" y="298" width="669" height="1" fill="rgba(200,200,200,0.22)"/>
<rect x="807" y="310" width="669" height="1" fill="rgba(200,200,200,0.22)"/>
<rect x="807" y="321" width="669" height="1" fill="rgba(200,200,200,0.22)"/>
<rect x="807" y="332" width="669" height="1" fill="rgba(200,200,200,0.22)"/>
<rect x="807" y="344" width="669" height="1" fill="rgba(200,200,200,0.22)"/>
<rect x="807" y="355" width="669" height="1" fill="rgba(200,200,200,0.22)"/>
<rect x="878" y="276" width="1" height="80" fill="rgba(200,200,200,0.22)"/>
<rect x="989" y="276" width="1" height="80" fill="rgba(200,200,200,0.22)"/>
<rect x="1101" y="276" width="1" height="80" fill="rgba(200,200,200,0.22)"/>
<rect x="1212" y="276" width="1" height="80" fill="rgba(200,200,200,0.22)"/>
<rect x="1324" y="276" width="1" height="80" fill="rgba(200,200,200,0.22)"/>
<rect x="1435" y="276" width="1" height="80" fill="rgba(200,200,200,0.22)"/>
<polygon points="807.00,309.00 1476.00,308.60 1476.00,356.00 807.00,356.00" fill="#7EB26D" fill-opacity="0.1"/>
<polyline points="807.00,309.00 1476.00,308.60" fill="none" stroke="#7EB26D" stroke-width="1.15" stroke-linejoin="round"/>
<polygon points="807.00,313.50 1476.00,313.40 1476.00,356.00 807.00,356.00" fill="#EAB839" fill-opacity="0.1"/>
<polyline points="807.00,313.50 1476.00,313.40" fill="none" stroke="#EAB839" stroke-width="1" stroke-linejoin="round"/>
<polygon points="807.00,283.00 1476.00,282.65 1476.00,356.00 807.00,356.00" fill="#6ED0E0" fill-opacity="0.1"/>
<polyline points="807.00,283.00 1476.00,282.65" fill="none" stroke="#6ED0E0" stroke-width="1.15" stroke-linejoin="round"/>
<polygon points="807.00,355.60 1476.00,355.60 1476.00,356.00 807.00,356.00" fill="#EF843C" fill-opacity="0.1"/>
<polyline points="807.00,355.60 1476.00,355.60" fill="none" stroke="#EF843C" stroke-width="1.15" stroke-linejoin="round"/>
</svg>
<div class="axis y"><span class="t" style="left:11.86px;top:39.04px;letter-spacing:-0.335px">280 K</span><span class="t" style="left:9.37px;top:51.04px;letter-spacing:-0.445px">46.7 K</span><span class="t" style="left:9.48px;top:62.04px;letter-spacing:-0.467px">7.78 K</span><span class="t" style="left:9.20px;top:74.04px;letter-spacing:-0.411px">1.30 K</span><span class="t" style="left:22.06px;top:85.04px;letter-spacing:-0.022px">216</span><span class="t" style="left:28.88px;top:96.04px;letter-spacing:-0.380px">36</span><span class="t" style="left:34.83px;top:108.04px;letter-spacing:0.000px">6</span><span class="t" style="left:35.60px;top:119.04px;letter-spacing:0.000px">1</span></div>
<div class="axis x"><span class="t" style="left:103.81px;top:134.04px;letter-spacing:-0.171px">22:00</span><span class="t" style="left:214.97px;top:134.04px;letter-spacing:-0.211px">00:00</span><span class="t" style="left:326.97px;top:134.04px;letter-spacing:-0.211px">02:00</span><span class="t" style="left:437.97px;top:134.04px;letter-spacing:-0.211px">04:00</span><span class="t" style="left:549.97px;top:134.04px;letter-spacing:-0.211px">06:00</span><span class="t" style="left:660.97px;top:134.04px;letter-spacing:-0.211px">08:00</span></div>
<div class="legend">
<div class="series"><i class="ic" style="left:18px;top:162px;background:#7EB26D"></i><span class="t alias" style="left:39.94px;top:158.04px;letter-spacing:0.136px">incremental</span><span class="t value" style="left:109.14px;top:158.04px;letter-spacing:-0.144px">Current: 1.64 K</span></div>
<div class="series"><i class="ic" style="left:198px;top:162px;background:#EAB839"></i><span class="t alias" style="left:219.80px;top:158.04px;letter-spacing:0.125px">major</span><span class="t value" style="left:256.84px;top:158.04px;letter-spacing:-0.076px">Current: 822</span></div>
<div class="series"><i class="ic" style="left:333px;top:162px;background:#6ED0E0"></i><span class="t alias" style="left:354.20px;top:158.04px;letter-spacing:0.200px">minor</span><span class="t value" style="left:391.54px;top:158.04px;letter-spacing:-0.130px">Current: 97.2 K</span></div>
<div class="series"><i class="ic" style="left:481px;top:162px;background:#EF843C"></i><span class="t alias" style="left:503.10px;top:158.04px;letter-spacing:-0.070px">weakcb</span><span class="t value" style="left:549.54px;top:158.04px;letter-spacing:-0.260px">Current: 1</span></div>
</div>
</section>
<section class="panel" style="left:9px;top:420px">
<h2 class="h" style="left:304.35px;top:7.35px;letter-spacing:-0.098px">Heap Memory Usage</h2>
<svg class="plot" width="740" height="180" viewBox="10 421 740 180">
<rect x="70" y="466" width="656" height="1" fill="rgba(200,200,200,0.22)"/>
<rect x="70" y="486" width="656" height="1" fill="rgba(200,200,200,0.22)"/>
<rect x="70" y="507" width="656" height="1" fill="rgba(200,200,200,0.22)"/>
<rect x="70" y="527" width="656" height="1" fill="rgba(200,200,200,0.22)"/>
<rect x="139" y="466" width="1" height="62" fill="rgba(200,200,200,0.22)"/>
<rect x="249" y="466" width="1" height="62" fill="rgba(200,200,200,0.22)"/>
<rect x="358" y="466" width="1" height="62" fill="rgba(200,200,200,0.22)"/>
<rect x="467" y="466" width="1" height="62" fill="rgba(200,200,200,0.22)"/>
<rect x="577" y="466" width="1" height="62" fill="rgba(200,200,200,0.22)"/>
<rect x="686" y="466" width="1" height="62" fill="rgba(200,200,200,0.22)"/>
<polygon points="70.00,488.75 70.10,489.35 71.10,485.40 73.60,485.40 74.60,489.43 77.90,489.43 79.21,489.35 80.21,485.40 82.71,485.40 83.71,489.20 87.01,489.20 88.32,489.35 89.32,485.40 91.82,485.40 92.82,489.36 96.12,489.36 97.43,489.35 98.43,485.40 100.93,485.40 101.93,489.65 105.23,489.65 107.54,489.35 108.54,486.30 109.54,489.55 114.34,489.55 116.65,489.35 117.65,486.30 118.65,489.55 123.45,489.55 124.76,489.35 125.76,485.40 128.26,485.40 129.26,489.47 132.56,489.47 133.87,489.35 134.87,485.40 137.37,485.40 138.37,489.48 141.67,489.48 142.98,489.35 143.98,485.40 146.48,485.40 147.48,489.47 150.78,489.47 152.09,489.35 153.09,485.40 155.59,485.40 156.59,489.67 159.89,489.67 161.20,489.35 162.20,485.40 164.70,485.40 165.70,489.31 169.00,489.31 171.31,489.35 172.31,486.30 173.31,489.55 178.11,489.55 179.42,489.35 180.42,485.40 182.92,485.40 183.92,489.61 187.22,489.61 188.53,489.35 189.53,485.40 192.03,485.40 193.03,489.62 196.33,489.62 197.64,489.35 198.64,485.40 201.14,485.40 202.14,489.28 205.44,489.28 206.75,489.35 207.75,485.40 210.25,485.40 211.25,489.74 214.55,489.74 215.86,489.35 216.86,485.40 219.36,485.40 220.36,489.63 223.66,489.63 224.97,489.35 225.97,485.40 228.47,485.40 229.47,489.59 232.77,489.59 234.08,489.35 235.08,485.40 237.58,485.40 238.58,489.46 241.88,489.46 243.19,489.35 244.19,485.40 246.69,485.40 247.69,489.17 250.99,489.17 253.30,489.35 254.30,486.30 255.30,489.55 260.10,489.55 270.52,489.35 271.52,485.40 274.02,485.40 275.02,489.31 278.32,489.31 280.63,489.35 281.63,486.30 282.63,489.55 287.43,489.55 288.74,489.35 289.74,485.40 292.24,485.40 293.24,489.42 296.54,489.42 297.85,489.35 298.85,485.40 301.35,485.40 302.35,489.74 305.65,489.74 306.96,489.35 307.96,485.40 310.46,485.40 311.46,489.37 314.76,489.37 316.07,489.35 317.07,485.40 319.57,485.40 320.57,489.29 323.87,489.29 325.18,489.35 326.18,485.40 328.68,485.40 329.68,489.27 332.98,489.27 334.29,489.35 335.29,485.40 337.79,485.40 338.79,489.69 342.09,489.69 343.40,489.35 344.40,485.40 346.90,485.40 347.90,489.44 351.20,489.44 352.51,489.35 353.51,485.40 356.01,485.40 357.01,489.63 360.31,489.63 362.62,489.35 363.62,486.30 364.62,489.55 369.42,489.55 370.73,489.35 371.73,485.40 374.23,485.40 375.23,489.70 378.53,489.70 379.84,489.35 380.84,485.40 383.34,485.40 384.34,489.60 387.64,489.60 398.06,489.35 399.06,485.40 401.56,485.40 402.56,489.26 405.86,489.26 408.17,489.35 409.17,486.30 410.17,489.55 414.97,489.55 417.28,489.35 418.28,486.30 419.28,489.55 424.08,489.55 434.50,489.35 435.50,485.40 438.00,485.40 439.00,489.73 442.30,489.73 443.61,489.35 444.61,485.40 447.11,485.40 448.11,489.39 451.41,489.39 462.83,489.35 463.83,486.30 464.83,489.55 469.63,489.55 471.94,489.35 472.94,486.30 473.94,489.55 478.74,489.55 480.05,489.35 481.05,485.40 483.55,485.40 484.55,489.23 487.85,489.23 489.16,489.35 490.16,485.40 492.66,485.40 493.66,489.69 496.96,489.69 499.27,489.35 500.27,486.30 501.27,489.55 506.07,489.55 516.49,489.35 517.49,485.40 519.99,485.40 520.99,489.65 524.29,489.65 525.60,489.35 526.60,485.40 529.10,485.40 530.10,489.54 533.40,489.54 534.71,489.35 535.71,485.40 538.21,485.40 539.21,489.48 542.51,489.48 543.82,489.35 544.82,485.40 547.32,485.40 548.32,489.16 551.62,489.16 553.93,489.35 554.93,486.30 555.93,489.55 560.73,489.55 562.04,489.35 563.04,485.40 565.54,485.40 566.54,489.47 569.84,489.47 571.15,489.35 572.15,485.40 574.65,485.40 575.65,489.41 578.95,489.41 580.26,489.35 581.26,485.40 583.76,485.40 584.76,489.65 588.06,489.65 589.37,489.35 590.37,485.40 592.87,485.40 593.87,489.30 597.17,489.30 598.48,489.35 599.48,485.40 601.98,485.40 602.98,489.29 606.28,489.29 607.59,489.35 608.59,485.40 611.09,485.40 612.09,489.31 615.39,489.31 616.70,489.35 617.70,485.40 620.20,485.40 621.20,489.23 624.50,489.23 625.81,489.35 626.81,485.40 629.31,485.40 630.31,489.36 633.61,489.36 635.92,489.35 636.92,486.30 637.92,489.55 642.72,489.55 644.03,489.35 645.03,485.40 647.53,485.40 648.53,489.69 651.83,489.69 654.14,489.35 655.14,486.30 656.14,489.55 660.94,489.55 662.25,489.35 663.25,485.40 665.75,485.40 666.75,489.45 670.05,489.45 671.36,489.35 672.36,485.40 674.86,485.40 675.86,489.46 679.16,489.46 680.47,489.35 681.47,485.40 683.97,485.40 684.97,489.41 688.27,489.41 690.58,489.35 691.58,486.30 692.58,489.55 697.38,489.55 700.40,489.35 701.40,481.35 704.60,481.35 705.60,489.65 708.30,489.35 709.40,486.35 711.60,486.35 712.70,489.05 726.00,488.85 726.00,528.40 70.00,528.40" fill="#7EB26D" fill-opacity="0.1"/>
<polygon points="70.00,491.60 70.90,491.20 72.10,490.80 73.90,491.94 77.40,491.94 78.90,491.20 80.01,491.20 81.21,490.80 83.01,491.59 86.51,491.59 88.01,491.20 89.12,491.20 90.32,490.80 92.12,491.74 95.62,491.74 97.12,491.20 98.23,491.20 99.43,490.80 101.23,491.65 104.73,491.65 106.23,491.20 107.34,491.20 108.54,490.80 110.34,491.52 113.84,491.52 115.34,491.20 116.45,491.20 117.65,490.80 119.45,492.36 122.95,492.36 124.45,491.20 125.56,491.20 126.76,490.80 128.56,491.63 132.06,491.63 133.56,491.20 134.67,491.20 135.87,490.80 137.67,491.52 141.17,491.52 142.67,491.20 143.78,491.20 144.98,490.80 146.78,492.38 150.28,492.38 151.78,491.20 152.89,491.20 154.09,490.80 155.89,492.13 159.39,492.13 160.89,491.20 162.00,491.20 163.20,490.80 165.00,491.83 168.50,491.83 170.00,491.20 171.11,491.20 172.31,490.80 174.11,491.65 177.61,491.65 179.11,491.20 180.22,491.20 181.42,490.80 183.22,491.98 186.72,491.98 188.22,491.20 189.33,491.20 190.53,490.80 192.33,491.80 195.83,491.80 197.33,491.20 198.44,491.20 199.64,490.80 201.44,492.23 204.94,492.23 206.44,491.20 207.55,491.20 208.75,490.80 210.55,492.27 214.05,492.27 215.55,491.20 216.66,491.20 217.86,490.80 219.66,492.24 223.16,492.24 224.66,491.20 225.77,491.20 226.97,490.80 228.77,491.70 232.27,491.70 233.77,491.20 234.88,491.20 236.08,490.80 237.88,491.82 241.38,491.82 242.88,491.20 243.99,491.20 245.19,490.80 246.99,491.53 250.49,491.53 251.99,491.20 253.10,491.20 254.30,490.80 256.10,491.75 259.60,491.75 261.10,491.20 263.71,491.30 271.32,491.20 272.52,490.80 274.32,492.12 277.82,492.12 279.32,491.20 280.43,491.20 281.63,490.80 283.43,492.36 286.93,492.36 288.43,491.20 289.54,491.20 290.74,490.80 292.54,492.34 296.04,492.34 297.54,491.20 298.65,491.20 299.85,490.80 301.65,492.36 305.15,492.36 306.65,491.20 307.76,491.20 308.96,490.80 310.76,491.70 314.26,491.70 315.76,491.20 316.87,491.20 318.07,490.80 319.87,491.68 323.37,491.68 324.87,491.20 325.98,491.20 327.18,490.80 328.98,492.06 332.48,492.06 333.98,491.20 335.09,491.20 336.29,490.80 338.09,492.26 341.59,492.26 343.09,491.20 344.20,491.20 345.40,490.80 347.20,492.09 350.70,492.09 352.20,491.20 353.31,491.20 354.51,490.80 356.31,491.58 359.81,491.58 361.31,491.20 362.42,491.20 363.62,490.80 365.42,492.09 368.92,492.09 370.42,491.20 371.53,491.20 372.73,490.80 374.53,492.20 378.03,492.20 379.53,491.20 380.64,491.20 381.84,490.80 383.64,491.93 387.14,491.93 388.64,491.20 391.25,491.30 398.86,491.20 400.06,490.80 401.86,492.21 405.36,492.21 406.86,491.20 407.97,491.20 409.17,490.80 410.97,491.80 414.47,491.80 415.97,491.20 417.08,491.20 418.28,490.80 420.08,492.22 423.58,492.22 425.08,491.20 427.69,491.30 435.30,491.20 436.50,490.80 438.30,491.86 441.80,491.86 443.30,491.20 444.41,491.20 445.61,490.80 447.41,492.35 450.91,492.35 452.41,491.20 455.02,491.30 462.63,491.20 463.83,490.80 465.63,492.15 469.13,492.15 470.63,491.20 471.74,491.20 472.94,490.80 474.74,491.65 478.24,491.65 479.74,491.20 480.85,491.20 482.05,490.80 483.85,491.64 487.35,491.64 488.85,491.20 489.96,491.20 491.16,490.80 492.96,492.23 496.46,492.23 497.96,491.20 499.07,491.20 500.27,490.80 502.07,491.63 505.57,491.63 507.07,491.20 509.68,491.30 517.29,491.20 518.49,490.80 520.29,492.38 523.79,492.38 525.29,491.20 526.40,491.20 527.60,490.80 529.40,491.82 532.90,491.82 534.40,491.20 535.51,491.20 536.71,490.80 538.51,491.62 542.01,491.62 543.51,491.20 544.62,491.20 545.82,490.80 547.62,492.37 551.12,492.37 552.62,491.20 553.73,491.20 554.93,490.80 556.73,492.08 560.23,492.08 561.73,491.20 562.84,491.20 564.04,490.80 565.84,492.34 569.34,492.34 570.84,491.20 571.95,491.20 573.15,490.80 574.95,492.28 578.45,492.28 579.95,491.20 581.06,491.20 582.26,490.80 584.06,491.69 587.56,491.69 589.06,491.20 590.17,491.20 591.37,490.80 593.17,491.76 596.67,491.76 598.17,491.20 599.28,491.20 600.48,490.80 602.28,492.03 605.78,492.03 607.28,491.20 608.39,491.20 609.59,490.80 611.39,491.88 614.89,491.88 616.39,491.20 617.50,491.20 618.70,490.80 620.50,492.32 624.00,492.32 625.50,491.20 626.61,491.20 627.81,490.80 629.61,491.91 633.11,491.91 634.61,491.20 635.72,491.20 636.92,490.80 638.72,492.03 642.22,492.03 643.72,491.20 644.83,491.20 646.03,490.80 647.83,491.88 651.33,491.88 652.83,491.20 653.94,491.20 655.14,490.80 656.94,492.33 660.44,492.33 661.94,491.20 663.05,491.20 664.25,490.80 666.05,491.98 669.55,491.98 671.05,491.20 672.16,491.20 673.36,490.80 675.16,491.52 678.66,491.52 680.16,491.20 681.27,491.20 682.47,490.80 684.27,491.66 687.77,491.66 689.27,491.20 690.38,491.20 691.58,490.80 693.38,491.50 696.88,491.50 698.38,491.20 701.50,491.20 702.70,490.80 704.50,492.22 708.00,492.22 709.50,491.20 712.00,490.60 714.00,489.70 726.00,489.50 726.00,528.40 70.00,528.40" fill="#EAB839" fill-opacity="0.1"/>
<polygon points="70.00,510.60 726.00,510.60 726.00,528.40 70.00,528.40" fill="#6ED0E0" fill-opacity="0.1"/>
<polygon points="70.00,471.20 699.50,473.20 701.50,471.20 704.00,470.90 726.00,470.30 726.00,528.40 70.00,528.40" fill="#EF843C" fill-opacity="0.1"/>
<polygon points="70.00,519.15 726.00,519.15 726.00,528.40 70.00,528.40" fill="#E24D42" fill-opacity="0.1"/>
<polygon points="70.00,527.70 726.00,527.70 726.00,528.40 70.00,528.40" fill="#1F78C1" fill-opacity="0.1"/>
<polyline points="70.00,488.75 70.10,489.35 71.10,485.40 73.60,485.40 74.60,489.43 77.90,489.43 79.21,489.35 80.21,485.40 82.71,485.40 83.71,489.20 87.01,489.20 88.32,489.35 89.32,485.40 91.82,485.40 92.82,489.36 96.12,489.36 97.43,489.35 98.43,485.40 100.93,485.40 101.93,489.65 105.23,489.65 107.54,489.35 108.54,486.30 109.54,489.55 114.34,489.55 116.65,489.35 117.65,486.30 118.65,489.55 123.45,489.55 124.76,489.35 125.76,485.40 128.26,485.40 129.26,489.47 132.56,489.47 133.87,489.35 134.87,485.40 137.37,485.40 138.37,489.48 141.67,489.48 142.98,489.35 143.98,485.40 146.48,485.40 147.48,489.47 150.78,489.47 152.09,489.35 153.09,485.40 155.59,485.40 156.59,489.67 159.89,489.67 161.20,489.35 162.20,485.40 164.70,485.40 165.70,489.31 169.00,489.31 171.31,489.35 172.31,486.30 173.31,489.55 178.11,489.55 179.42,489.35 180.42,485.40 182.92,485.40 183.92,489.61 187.22,489.61 188.53,489.35 189.53,485.40 192.03,485.40 193.03,489.62 196.33,489.62 197.64,489.35 198.64,485.40 201.14,485.40 202.14,489.28 205.44,489.28 206.75,489.35 207.75,485.40 210.25,485.40 211.25,489.74 214.55,489.74 215.86,489.35 216.86,485.40 219.36,485.40 220.36,489.63 223.66,489.63 224.97,489.35 225.97,485.40 228.47,485.40 229.47,489.59 232.77,489.59 234.08,489.35 235.08,485.40 237.58,485.40 238.58,489.46 241.88,489.46 243.19,489.35 244.19,485.40 246.69,485.40 247.69,489.17 250.99,489.17 253.30,489.35 254.30,486.30 255.30,489.55 260.10,489.55 270.52,489.35 271.52,485.40 274.02,485.40 275.02,489.31 278.32,489.31 280.63,489.35 281.63,486.30 282.63,489.55 287.43,489.55 288.74,489.35 289.74,485.40 292.24,485.40 293.24,489.42 296.54,489.42 297.85,489.35 298.85,485.40 301.35,485.40 302.35,489.74 305.65,489.74 306.96,489.35 307.96,485.40 310.46,485.40 311.46,489.37 314.76,489.37 316.07,489.35 317.07,485.40 319.57,485.40 320.57,489.29 323.87,489.29 325.18,489.35 326.18,485.40 328.68,485.40 329.68,489.27 332.98,489.27 334.29,489.35 335.29,485.40 337.79,485.40 338.79,489.69 342.09,489.69 343.40,489.35 344.40,485.40 346.90,485.40 347.90,489.44 351.20,489.44 352.51,489.35 353.51,485.40 356.01,485.40 357.01,489.63 360.31,489.63 362.62,489.35 363.62,486.30 364.62,489.55 369.42,489.55 370.73,489.35 371.73,485.40 374.23,485.40 375.23,489.70 378.53,489.70 379.84,489.35 380.84,485.40 383.34,485.40 384.34,489.60 387.64,489.60 398.06,489.35 399.06,485.40 401.56,485.40 402.56,489.26 405.86,489.26 408.17,489.35 409.17,486.30 410.17,489.55 414.97,489.55 417.28,489.35 418.28,486.30 419.28,489.55 424.08,489.55 434.50,489.35 435.50,485.40 438.00,485.40 439.00,489.73 442.30,489.73 443.61,489.35 444.61,485.40 447.11,485.40 448.11,489.39 451.41,489.39 462.83,489.35 463.83,486.30 464.83,489.55 469.63,489.55 471.94,489.35 472.94,486.30 473.94,489.55 478.74,489.55 480.05,489.35 481.05,485.40 483.55,485.40 484.55,489.23 487.85,489.23 489.16,489.35 490.16,485.40 492.66,485.40 493.66,489.69 496.96,489.69 499.27,489.35 500.27,486.30 501.27,489.55 506.07,489.55 516.49,489.35 517.49,485.40 519.99,485.40 520.99,489.65 524.29,489.65 525.60,489.35 526.60,485.40 529.10,485.40 530.10,489.54 533.40,489.54 534.71,489.35 535.71,485.40 538.21,485.40 539.21,489.48 542.51,489.48 543.82,489.35 544.82,485.40 547.32,485.40 548.32,489.16 551.62,489.16 553.93,489.35 554.93,486.30 555.93,489.55 560.73,489.55 562.04,489.35 563.04,485.40 565.54,485.40 566.54,489.47 569.84,489.47 571.15,489.35 572.15,485.40 574.65,485.40 575.65,489.41 578.95,489.41 580.26,489.35 581.26,485.40 583.76,485.40 584.76,489.65 588.06,489.65 589.37,489.35 590.37,485.40 592.87,485.40 593.87,489.30 597.17,489.30 598.48,489.35 599.48,485.40 601.98,485.40 602.98,489.29 606.28,489.29 607.59,489.35 608.59,485.40 611.09,485.40 612.09,489.31 615.39,489.31 616.70,489.35 617.70,485.40 620.20,485.40 621.20,489.23 624.50,489.23 625.81,489.35 626.81,485.40 629.31,485.40 630.31,489.36 633.61,489.36 635.92,489.35 636.92,486.30 637.92,489.55 642.72,489.55 644.03,489.35 645.03,485.40 647.53,485.40 648.53,489.69 651.83,489.69 654.14,489.35 655.14,486.30 656.14,489.55 660.94,489.55 662.25,489.35 663.25,485.40 665.75,485.40 666.75,489.45 670.05,489.45 671.36,489.35 672.36,485.40 674.86,485.40 675.86,489.46 679.16,489.46 680.47,489.35 681.47,485.40 683.97,485.40 684.97,489.41 688.27,489.41 690.58,489.35 691.58,486.30 692.58,489.55 697.38,489.55 700.40,489.35 701.40,481.35 704.60,481.35 705.60,489.65 708.30,489.35 709.40,486.35 711.60,486.35 712.70,489.05 726.00,488.85" fill="none" stroke="#7EB26D" stroke-opacity="0.88" stroke-width="0.9" stroke-linejoin="round"/>
<polyline points="70.00,491.60 70.90,491.20 72.10,490.80 73.90,491.94 77.40,491.94 78.90,491.20 80.01,491.20 81.21,490.80 83.01,491.59 86.51,491.59 88.01,491.20 89.12,491.20 90.32,490.80 92.12,491.74 95.62,491.74 97.12,491.20 98.23,491.20 99.43,490.80 101.23,491.65 104.73,491.65 106.23,491.20 107.34,491.20 108.54,490.80 110.34,491.52 113.84,491.52 115.34,491.20 116.45,491.20 117.65,490.80 119.45,492.36 122.95,492.36 124.45,491.20 125.56,491.20 126.76,490.80 128.56,491.63 132.06,491.63 133.56,491.20 134.67,491.20 135.87,490.80 137.67,491.52 141.17,491.52 142.67,491.20 143.78,491.20 144.98,490.80 146.78,492.38 150.28,492.38 151.78,491.20 152.89,491.20 154.09,490.80 155.89,492.13 159.39,492.13 160.89,491.20 162.00,491.20 163.20,490.80 165.00,491.83 168.50,491.83 170.00,491.20 171.11,491.20 172.31,490.80 174.11,491.65 177.61,491.65 179.11,491.20 180.22,491.20 181.42,490.80 183.22,491.98 186.72,491.98 188.22,491.20 189.33,491.20 190.53,490.80 192.33,491.80 195.83,491.80 197.33,491.20 198.44,491.20 199.64,490.80 201.44,492.23 204.94,492.23 206.44,491.20 207.55,491.20 208.75,490.80 210.55,492.27 214.05,492.27 215.55,491.20 216.66,491.20 217.86,490.80 219.66,492.24 223.16,492.24 224.66,491.20 225.77,491.20 226.97,490.80 228.77,491.70 232.27,491.70 233.77,491.20 234.88,491.20 236.08,490.80 237.88,491.82 241.38,491.82 242.88,491.20 243.99,491.20 245.19,490.80 246.99,491.53 250.49,491.53 251.99,491.20 253.10,491.20 254.30,490.80 256.10,491.75 259.60,491.75 261.10,491.20 263.71,491.30 271.32,491.20 272.52,490.80 274.32,492.12 277.82,492.12 279.32,491.20 280.43,491.20 281.63,490.80 283.43,492.36 286.93,492.36 288.43,491.20 289.54,491.20 290.74,490.80 292.54,492.34 296.04,492.34 297.54,491.20 298.65,491.20 299.85,490.80 301.65,492.36 305.15,492.36 306.65,491.20 307.76,491.20 308.96,490.80 310.76,491.70 314.26,491.70 315.76,491.20 316.87,491.20 318.07,490.80 319.87,491.68 323.37,491.68 324.87,491.20 325.98,491.20 327.18,490.80 328.98,492.06 332.48,492.06 333.98,491.20 335.09,491.20 336.29,490.80 338.09,492.26 341.59,492.26 343.09,491.20 344.20,491.20 345.40,490.80 347.20,492.09 350.70,492.09 352.20,491.20 353.31,491.20 354.51,490.80 356.31,491.58 359.81,491.58 361.31,491.20 362.42,491.20 363.62,490.80 365.42,492.09 368.92,492.09 370.42,491.20 371.53,491.20 372.73,490.80 374.53,492.20 378.03,492.20 379.53,491.20 380.64,491.20 381.84,490.80 383.64,491.93 387.14,491.93 388.64,491.20 391.25,491.30 398.86,491.20 400.06,490.80 401.86,492.21 405.36,492.21 406.86,491.20 407.97,491.20 409.17,490.80 410.97,491.80 414.47,491.80 415.97,491.20 417.08,491.20 418.28,490.80 420.08,492.22 423.58,492.22 425.08,491.20 427.69,491.30 435.30,491.20 436.50,490.80 438.30,491.86 441.80,491.86 443.30,491.20 444.41,491.20 445.61,490.80 447.41,492.35 450.91,492.35 452.41,491.20 455.02,491.30 462.63,491.20 463.83,490.80 465.63,492.15 469.13,492.15 470.63,491.20 471.74,491.20 472.94,490.80 474.74,491.65 478.24,491.65 479.74,491.20 480.85,491.20 482.05,490.80 483.85,491.64 487.35,491.64 488.85,491.20 489.96,491.20 491.16,490.80 492.96,492.23 496.46,492.23 497.96,491.20 499.07,491.20 500.27,490.80 502.07,491.63 505.57,491.63 507.07,491.20 509.68,491.30 517.29,491.20 518.49,490.80 520.29,492.38 523.79,492.38 525.29,491.20 526.40,491.20 527.60,490.80 529.40,491.82 532.90,491.82 534.40,491.20 535.51,491.20 536.71,490.80 538.51,491.62 542.01,491.62 543.51,491.20 544.62,491.20 545.82,490.80 547.62,492.37 551.12,492.37 552.62,491.20 553.73,491.20 554.93,490.80 556.73,492.08 560.23,492.08 561.73,491.20 562.84,491.20 564.04,490.80 565.84,492.34 569.34,492.34 570.84,491.20 571.95,491.20 573.15,490.80 574.95,492.28 578.45,492.28 579.95,491.20 581.06,491.20 582.26,490.80 584.06,491.69 587.56,491.69 589.06,491.20 590.17,491.20 591.37,490.80 593.17,491.76 596.67,491.76 598.17,491.20 599.28,491.20 600.48,490.80 602.28,492.03 605.78,492.03 607.28,491.20 608.39,491.20 609.59,490.80 611.39,491.88 614.89,491.88 616.39,491.20 617.50,491.20 618.70,490.80 620.50,492.32 624.00,492.32 625.50,491.20 626.61,491.20 627.81,490.80 629.61,491.91 633.11,491.91 634.61,491.20 635.72,491.20 636.92,490.80 638.72,492.03 642.22,492.03 643.72,491.20 644.83,491.20 646.03,490.80 647.83,491.88 651.33,491.88 652.83,491.20 653.94,491.20 655.14,490.80 656.94,492.33 660.44,492.33 661.94,491.20 663.05,491.20 664.25,490.80 666.05,491.98 669.55,491.98 671.05,491.20 672.16,491.20 673.36,490.80 675.16,491.52 678.66,491.52 680.16,491.20 681.27,491.20 682.47,490.80 684.27,491.66 687.77,491.66 689.27,491.20 690.38,491.20 691.58,490.80 693.38,491.50 696.88,491.50 698.38,491.20 701.50,491.20 702.70,490.80 704.50,492.22 708.00,492.22 709.50,491.20 712.00,490.60 714.00,489.70 726.00,489.50" fill="none" stroke="#EAB839" stroke-width="0.9" stroke-linejoin="round"/>
<polyline points="70.00,510.60 726.00,510.60" fill="none" stroke="#6ED0E0" stroke-width="1" stroke-linejoin="round"/>
<polyline points="70.00,471.20 699.50,473.20 701.50,471.20 704.00,470.90 726.00,470.30" fill="none" stroke="#EF843C" stroke-width="1" stroke-linejoin="round"/>
<polyline points="70.00,519.15 726.00,519.15" fill="none" stroke="#E24D42" stroke-width="1" stroke-linejoin="round"/>
<polyline points="70.00,527.70 726.00,527.70" fill="none" stroke="#1F78C1" stroke-width="1.2" stroke-linejoin="round"/>
</svg>
<div class="axis y"><span class="t" style="left:11.86px;top:39.04px;letter-spacing:-0.172px">286 MiB</span><span class="t" style="left:11.80px;top:60.04px;letter-spacing:-0.163px">191 MiB</span><span class="t" style="left:8.96px;top:81.04px;letter-spacing:-0.206px">95.4 MiB</span><span class="t" style="left:38.12px;top:101.04px;letter-spacing:-0.648px">0 B</span></div>
<div class="axis x"><span class="t" style="left:114.81px;top:116.04px;letter-spacing:-0.171px">22:00</span><span class="t" style="left:224.97px;top:116.04px;letter-spacing:-0.211px">00:00</span><span class="t" style="left:333.97px;top:116.04px;letter-spacing:-0.211px">02:00</span><span class="t" style="left:442.97px;top:116.04px;letter-spacing:-0.211px">04:00</span><span class="t" style="left:552.97px;top:116.04px;letter-spacing:-0.211px">06:00</span><span class="t" style="left:661.97px;top:116.04px;letter-spacing:-0.211px">08:00</span></div>
<div class="legend">
<div class="series"><i class="ic" style="left:18px;top:144px;background:#7EB26D"></i><span class="t alias" style="left:40.47px;top:140.04px;letter-spacing:0.059px">total</span><span class="t value" style="left:70.04px;top:140.04px;letter-spacing:-0.069px">Current: 183 MiB</span></div>
<div class="series"><i class="ic" style="left:169px;top:144px;background:#EAB839"></i><span class="t alias" style="left:191.25px;top:140.04px;letter-spacing:-0.088px">used</span><span class="t value" style="left:223.24px;top:140.04px;letter-spacing:-0.063px">Current: 181 MiB</span></div>
<div class="series"><i class="ic" style="left:323px;top:144px;background:#6ED0E0"></i><span class="t alias" style="left:344.41px;top:140.04px;letter-spacing:0.043px">resident</span><span class="t value" style="left:393.84px;top:140.04px;letter-spacing:-0.076px">Current: 79.9 MiB</span></div>
<div class="series"><i class="ic" style="left:496px;top:144px;background:#EF843C"></i><span class="t alias" style="left:518.00px;top:140.04px;letter-spacing:0.029px">resident</span><span class="t value" style="left:567.34px;top:140.04px;letter-spacing:-0.063px">Current: 267 MiB</span></div>
<div class="series"><i class="ic" style="left:18px;top:162px;background:#E24D42"></i><span class="t alias" style="left:39.91px;top:158.04px;letter-spacing:0.000px">resident</span><span class="t value" style="left:89.34px;top:158.04px;letter-spacing:-0.107px">Current: 40.9 MiB</span></div>
<div class="series"><i class="ic" style="left:192px;top:162px;background:#1F78C1"></i><span class="t alias" style="left:213.56px;top:158.04px;letter-spacing:0.035px">external</span><span class="t value" style="left:262.44px;top:158.04px;letter-spacing:-0.107px">Current: 1.97 MiB</span></div>
</div>
</section>
<section class="panel" style="left:759px;top:420px">
<h2 class="h" style="left:314.60px;top:7.35px;letter-spacing:-0.217px">Heap Space Used</h2>
<svg class="plot" width="740" height="180" viewBox="760 421 740 180">
<rect x="820" y="466" width="656" height="1" fill="rgba(200,200,200,0.22)"/>
<rect x="820" y="480" width="656" height="1" fill="rgba(200,200,200,0.22)"/>
<rect x="820" y="494" width="656" height="1" fill="rgba(200,200,200,0.22)"/>
<rect x="820" y="508" width="656" height="1" fill="rgba(200,200,200,0.22)"/>
<rect x="820" y="522" width="656" height="1" fill="rgba(200,200,200,0.22)"/>
<rect x="889" y="466" width="1" height="57" fill="rgba(200,200,200,0.22)"/>
<rect x="999" y="466" width="1" height="57" fill="rgba(200,200,200,0.22)"/>
<rect x="1108" y="466" width="1" height="57" fill="rgba(200,200,200,0.22)"/>
<rect x="1217" y="466" width="1" height="57" fill="rgba(200,200,200,0.22)"/>
<rect x="1327" y="466" width="1" height="57" fill="rgba(200,200,200,0.22)"/>
<rect x="1436" y="466" width="1" height="57" fill="rgba(200,200,200,0.22)"/>
<polygon points="820.00,522.10 1476.00,522.10 1476.00,522.90 820.00,522.90" fill="#7EB26D" fill-opacity="0.1"/>
<polygon points="820.00,521.50 1476.00,521.50 1476.00,522.10 820.00,522.10" fill="#EAB839" fill-opacity="0.1"/>
<polygon points="820.00,515.40 1476.00,515.40 1476.00,521.50 820.00,521.50" fill="#6ED0E0" fill-opacity="0.1"/>
<polygon points="820.00,514.50 820.90,514.40 822.80,512.75 824.70,514.40 830.01,514.40 831.91,512.75 833.81,514.40 839.12,514.40 841.02,512.75 842.92,514.40 848.23,514.40 850.13,512.75 852.03,514.40 857.34,514.40 859.24,512.75 861.14,514.40 866.45,514.40 868.35,512.75 870.25,514.40 875.56,514.40 877.46,512.75 879.36,514.40 884.67,514.40 886.57,512.75 888.47,514.40 893.78,514.40 895.68,512.75 897.58,514.40 902.89,514.40 904.79,512.75 906.69,514.40 912.00,514.40 913.90,512.75 915.80,514.40 921.11,514.40 923.01,512.75 924.91,514.40 930.22,514.40 932.12,512.75 934.02,514.40 939.33,514.40 941.23,512.75 943.13,514.40 948.44,514.40 950.34,512.75 952.24,514.40 957.55,514.40 959.45,512.75 961.35,514.40 966.66,514.40 968.56,512.75 970.46,514.40 975.77,514.40 977.67,512.75 979.57,514.40 984.88,514.40 986.78,512.75 988.68,514.40 993.99,514.40 995.89,512.75 997.79,514.40 1003.10,514.40 1005.00,512.75 1006.90,514.40 1012.21,514.40 1014.11,512.75 1016.01,514.40 1021.32,514.40 1023.22,512.75 1025.12,514.40 1030.43,514.40 1032.33,512.75 1034.23,514.40 1039.54,514.40 1041.44,512.75 1043.34,514.40 1048.65,514.40 1050.55,512.75 1052.45,514.40 1057.76,514.40 1059.66,512.75 1061.56,514.40 1066.87,514.40 1068.77,512.75 1070.67,514.40 1075.98,514.40 1077.88,512.75 1079.78,514.40 1085.09,514.40 1086.99,512.75 1088.89,514.40 1094.20,514.40 1096.10,512.75 1098.00,514.40 1103.31,514.40 1105.21,512.75 1107.11,514.40 1112.42,514.40 1114.32,512.75 1116.22,514.40 1121.53,514.40 1123.43,512.75 1125.33,514.40 1130.64,514.40 1132.54,512.75 1134.44,514.40 1139.75,514.40 1141.65,512.75 1143.55,514.40 1148.86,514.40 1150.76,512.75 1152.66,514.40 1157.97,514.40 1159.87,512.75 1161.77,514.40 1167.08,514.40 1168.98,512.75 1170.88,514.40 1176.19,514.40 1178.09,512.75 1179.99,514.40 1185.30,514.40 1187.20,512.75 1189.10,514.40 1194.41,514.40 1196.31,512.75 1198.21,514.40 1203.52,514.40 1205.42,512.75 1207.32,514.40 1212.63,514.40 1214.53,512.75 1216.43,514.40 1221.74,514.40 1223.64,512.75 1225.54,514.40 1230.85,514.40 1232.75,512.75 1234.65,514.40 1239.96,514.40 1241.86,512.75 1243.76,514.40 1249.07,514.40 1250.97,512.75 1252.87,514.40 1258.18,514.40 1260.08,512.75 1261.98,514.40 1267.29,514.40 1269.19,512.75 1271.09,514.40 1276.40,514.40 1278.30,512.75 1280.20,514.40 1285.51,514.40 1287.41,512.75 1289.31,514.40 1294.62,514.40 1296.52,512.75 1298.42,514.40 1303.73,514.40 1305.63,512.75 1307.53,514.40 1312.84,514.40 1314.74,512.75 1316.64,514.40 1321.95,514.40 1323.85,512.75 1325.75,514.40 1331.06,514.40 1332.96,512.75 1334.86,514.40 1340.17,514.40 1342.07,512.75 1343.97,514.40 1349.28,514.40 1351.18,512.75 1353.08,514.40 1358.39,514.40 1360.29,512.75 1362.19,514.40 1367.50,514.40 1369.40,512.75 1371.30,514.40 1376.61,514.40 1378.51,512.75 1380.41,514.40 1385.72,514.40 1387.62,512.75 1389.52,514.40 1394.83,514.40 1396.73,512.75 1398.63,514.40 1403.94,514.40 1405.84,512.75 1407.74,514.40 1413.05,514.40 1414.95,512.75 1416.85,514.40 1422.16,514.40 1424.06,512.75 1425.96,514.40 1431.27,514.40 1433.17,512.75 1435.07,514.40 1440.38,514.40 1442.28,512.75 1444.18,514.40 1449.00,514.40 1454.50,510.30 1455.60,514.40 1458.60,514.40 1460.50,512.75 1462.40,514.40 1467.71,514.40 1469.61,512.75 1471.51,514.40 1476.00,514.50 1476.00,515.40 820.00,515.40" fill="#E24D42" fill-opacity="0.1"/>
<polygon points="820.00,470.43 821.98,472.81 824.62,474.40 829.24,474.40 831.88,471.49 833.86,473.08 837.82,473.08 841.12,470.43 843.10,472.15 849.70,472.15 852.34,473.87 856.30,473.47 858.02,470.83 859.60,472.15 864.88,472.15 867.26,469.91 868.84,471.23 875.45,471.23 878.75,473.87 884.03,473.87 887.72,470.83 889.97,472.55 893.27,472.55 896.57,470.43 898.55,471.49 902.51,471.49 907.13,474.40 911.75,473.87 913.47,471.23 915.05,472.55 920.33,472.55 922.44,469.91 924.29,471.49 929.57,471.49 932.21,473.08 933.53,472.15 935.51,473.87 938.15,473.87 942.11,471.23 944.09,472.15 946.73,472.15 950.30,469.51 952.67,471.23 957.29,471.23 958.61,473.87 960.59,472.81 963.23,474.79 965.87,474.40 969.17,471.49 971.82,472.81 975.12,472.81 978.42,470.43 980.40,471.49 984.36,471.49 986.34,472.81 987.66,472.02 990.30,473.60 992.94,473.08 995.84,470.70 997.95,472.15 1002.18,472.15 1004.55,469.51 1006.80,471.23 1011.42,471.23 1014.06,474.13 1015.26,470.43 1017.24,472.81 1019.88,474.40 1024.50,474.40 1027.14,471.49 1029.12,473.08 1033.08,473.08 1036.38,470.43 1038.36,472.15 1044.96,472.15 1047.60,473.87 1051.56,473.47 1053.28,470.83 1054.86,472.15 1060.14,472.15 1062.52,469.91 1064.10,471.23 1070.70,471.23 1074.01,473.87 1079.29,473.87 1082.98,470.83 1085.23,472.55 1088.53,472.55 1091.83,470.43 1093.81,471.49 1097.77,471.49 1102.39,474.40 1107.01,473.87 1108.72,471.23 1110.31,472.55 1115.59,472.55 1117.70,469.91 1119.55,471.49 1124.83,471.49 1127.47,473.08 1128.79,472.15 1130.77,473.87 1133.41,473.87 1137.37,471.23 1139.35,472.15 1141.99,472.15 1145.56,469.51 1147.93,471.23 1152.55,471.23 1153.87,473.87 1155.85,472.81 1158.49,474.79 1161.13,474.40 1164.43,471.49 1167.07,472.81 1170.37,472.81 1173.68,470.43 1175.66,471.49 1179.62,471.49 1181.60,472.81 1182.92,472.02 1185.56,473.60 1188.20,473.08 1191.10,470.70 1193.21,472.15 1197.44,472.15 1199.81,469.51 1202.06,471.23 1206.68,471.23 1209.32,474.13 1210.52,470.43 1212.50,472.81 1215.14,474.40 1219.76,474.40 1222.40,471.49 1224.38,473.08 1228.34,473.08 1231.64,470.43 1233.62,472.15 1240.22,472.15 1242.86,473.87 1246.82,473.47 1248.54,470.83 1250.12,472.15 1255.40,472.15 1257.78,469.91 1259.36,471.23 1265.96,471.23 1269.26,473.87 1274.55,473.87 1278.24,470.83 1280.49,472.55 1283.79,472.55 1287.09,470.43 1289.07,471.49 1293.03,471.49 1297.65,474.40 1302.27,473.87 1303.98,471.23 1305.57,472.55 1310.85,472.55 1312.96,469.91 1314.81,471.49 1320.09,471.49 1322.73,473.08 1324.05,472.15 1326.03,473.87 1328.67,473.87 1332.63,471.23 1334.61,472.15 1337.25,472.15 1340.82,469.51 1343.19,471.23 1347.81,471.23 1349.13,473.87 1351.11,472.81 1353.75,474.79 1356.39,474.40 1359.69,471.49 1362.33,472.81 1365.63,472.81 1368.93,470.43 1370.91,471.49 1374.88,471.49 1376.86,472.81 1378.18,472.02 1380.82,473.60 1383.46,473.08 1386.36,470.70 1388.47,472.15 1392.70,472.15 1395.07,469.51 1397.32,471.23 1401.94,471.23 1404.58,474.13 1405.78,470.43 1407.76,472.81 1410.40,474.40 1415.02,474.40 1417.66,471.49 1419.64,473.08 1423.60,473.08 1426.90,470.43 1428.88,472.15 1435.48,472.15 1438.12,473.87 1442.08,473.47 1443.80,470.83 1445.38,472.15 1450.50,471.60 1451.50,467.40 1454.80,467.40 1456.00,471.90 1458.50,471.60 1460.50,468.60 1463.00,470.40 1467.00,470.40 1469.00,469.20 1476.00,468.90 1476.00,514.50 1471.51,514.40 1469.61,512.75 1467.71,514.40 1462.40,514.40 1460.50,512.75 1458.60,514.40 1455.60,514.40 1454.50,510.30 1449.00,514.40 1444.18,514.40 1442.28,512.75 1440.38,514.40 1435.07,514.40 1433.17,512.75 1431.27,514.40 1425.96,514.40 1424.06,512.75 1422.16,514.40 1416.85,514.40 1414.95,512.75 1413.05,514.40 1407.74,514.40 1405.84,512.75 1403.94,514.40 1398.63,514.40 1396.73,512.75 1394.83,514.40 1389.52,514.40 1387.62,512.75 1385.72,514.40 1380.41,514.40 1378.51,512.75 1376.61,514.40 1371.30,514.40 1369.40,512.75 1367.50,514.40 1362.19,514.40 1360.29,512.75 1358.39,514.40 1353.08,514.40 1351.18,512.75 1349.28,514.40 1343.97,514.40 1342.07,512.75 1340.17,514.40 1334.86,514.40 1332.96,512.75 1331.06,514.40 1325.75,514.40 1323.85,512.75 1321.95,514.40 1316.64,514.40 1314.74,512.75 1312.84,514.40 1307.53,514.40 1305.63,512.75 1303.73,514.40 1298.42,514.40 1296.52,512.75 1294.62,514.40 1289.31,514.40 1287.41,512.75 1285.51,514.40 1280.20,514.40 1278.30,512.75 1276.40,514.40 1271.09,514.40 1269.19,512.75 1267.29,514.40 1261.98,514.40 1260.08,512.75 1258.18,514.40 1252.87,514.40 1250.97,512.75 1249.07,514.40 1243.76,514.40 1241.86,512.75 1239.96,514.40 1234.65,514.40 1232.75,512.75 1230.85,514.40 1225.54,514.40 1223.64,512.75 1221.74,514.40 1216.43,514.40 1214.53,512.75 1212.63,514.40 1207.32,514.40 1205.42,512.75 1203.52,514.40 1198.21,514.40 1196.31,512.75 1194.41,514.40 1189.10,514.40 1187.20,512.75 1185.30,514.40 1179.99,514.40 1178.09,512.75 1176.19,514.40 1170.88,514.40 1168.98,512.75 1167.08,514.40 1161.77,514.40 1159.87,512.75 1157.97,514.40 1152.66,514.40 1150.76,512.75 1148.86,514.40 1143.55,514.40 1141.65,512.75 1139.75,514.40 1134.44,514.40 1132.54,512.75 1130.64,514.40 1125.33,514.40 1123.43,512.75 1121.53,514.40 1116.22,514.40 1114.32,512.75 1112.42,514.40 1107.11,514.40 1105.21,512.75 1103.31,514.40 1098.00,514.40 1096.10,512.75 1094.20,514.40 1088.89,514.40 1086.99,512.75 1085.09,514.40 1079.78,514.40 1077.88,512.75 1075.98,514.40 1070.67,514.40 1068.77,512.75 1066.87,514.40 1061.56,514.40 1059.66,512.75 1057.76,514.40 1052.45,514.40 1050.55,512.75 1048.65,514.40 1043.34,514.40 1041.44,512.75 1039.54,514.40 1034.23,514.40 1032.33,512.75 1030.43,514.40 1025.12,514.40 1023.22,512.75 1021.32,514.40 1016.01,514.40 1014.11,512.75 1012.21,514.40 1006.90,514.40 1005.00,512.75 1003.10,514.40 997.79,514.40 995.89,512.75 993.99,514.40 988.68,514.40 986.78,512.75 984.88,514.40 979.57,514.40 977.67,512.75 975.77,514.40 970.46,514.40 968.56,512.75 966.66,514.40 961.35,514.40 959.45,512.75 957.55,514.40 952.24,514.40 950.34,512.75 948.44,514.40 943.13,514.40 941.23,512.75 939.33,514.40 934.02,514.40 932.12,512.75 930.22,514.40 924.91,514.40 923.01,512.75 921.11,514.40 915.80,514.40 913.90,512.75 912.00,514.40 906.69,514.40 904.79,512.75 902.89,514.40 897.58,514.40 895.68,512.75 893.78,514.40 888.47,514.40 886.57,512.75 884.67,514.40 879.36,514.40 877.46,512.75 875.56,514.40 870.25,514.40 868.35,512.75 866.45,514.40 861.14,514.40 859.24,512.75 857.34,514.40 852.03,514.40 850.13,512.75 848.23,514.40 842.92,514.40 841.02,512.75 839.12,514.40 833.81,514.40 831.91,512.75 830.01,514.40 824.70,514.40 822.80,512.75 820.90,514.40 820.00,514.50" fill="#BA43A9" fill-opacity="0.1"/>
<polyline points="820.00,522.10 1476.00,522.10" fill="none" stroke="#7EB26D" stroke-opacity="0.6" stroke-width="1"/>
<polyline points="820.00,521.50 1476.00,521.50" fill="none" stroke="#EAB839" stroke-width="1.15" stroke-linejoin="round"/>
<polyline points="820.00,515.40 1476.00,515.40" fill="none" stroke="#6ED0E0" stroke-opacity="0.55" stroke-width="1"/>
<rect x="820" y="514" width="656" height="1" fill="#5d80c4" fill-opacity="0.9"/>
<rect x="820" y="513" width="656" height="1" fill="#E24D42" fill-opacity="0.16"/>
<polyline points="820.90,514.40 822.80,512.75 824.70,514.40" fill="none" stroke="#3a84d4" stroke-width="1" stroke-linejoin="round"/>
<rect x="821.00" y="514" width="3.2" height="1" fill="#f0902e"/>
<polyline points="830.01,514.40 831.91,512.75 833.81,514.40" fill="none" stroke="#3a84d4" stroke-width="1" stroke-linejoin="round"/>
<rect x="830.11" y="514" width="3.2" height="1" fill="#f0902e"/>
<polyline points="839.12,514.40 841.02,512.75 842.92,514.40" fill="none" stroke="#3a84d4" stroke-width="1" stroke-linejoin="round"/>
<rect x="839.22" y="514" width="3.2" height="1" fill="#f0902e"/>
<polyline points="848.23,514.40 850.13,512.75 852.03,514.40" fill="none" stroke="#3a84d4" stroke-width="1" stroke-linejoin="round"/>
<rect x="848.33" y="514" width="3.2" height="1" fill="#f0902e"/>
<polyline points="857.34,514.40 859.24,512.75 861.14,514.40" fill="none" stroke="#3a84d4" stroke-width="1" stroke-linejoin="round"/>
<rect x="857.44" y="514" width="3.2" height="1" fill="#f0902e"/>
<polyline points="866.45,514.40 868.35,512.75 870.25,514.40" fill="none" stroke="#3a84d4" stroke-width="1" stroke-linejoin="round"/>
<rect x="866.55" y="514" width="3.2" height="1" fill="#f0902e"/>
<polyline points="875.56,514.40 877.46,512.75 879.36,514.40" fill="none" stroke="#3a84d4" stroke-width="1" stroke-linejoin="round"/>
<rect x="875.66" y="514" width="3.2" height="1" fill="#f0902e"/>
<polyline points="884.67,514.40 886.57,512.75 888.47,514.40" fill="none" stroke="#3a84d4" stroke-width="1" stroke-linejoin="round"/>
<rect x="884.77" y="514" width="3.2" height="1" fill="#f0902e"/>
<polyline points="893.78,514.40 895.68,512.75 897.58,514.40" fill="none" stroke="#3a84d4" stroke-width="1" stroke-linejoin="round"/>
<rect x="893.88" y="514" width="3.2" height="1" fill="#f0902e"/>
<polyline points="902.89,514.40 904.79,512.75 906.69,514.40" fill="none" stroke="#3a84d4" stroke-width="1" stroke-linejoin="round"/>
<rect x="902.99" y="514" width="3.2" height="1" fill="#f0902e"/>
<polyline points="912.00,514.40 913.90,512.75 915.80,514.40" fill="none" stroke="#3a84d4" stroke-width="1" stroke-linejoin="round"/>
<rect x="912.10" y="514" width="3.2" height="1" fill="#f0902e"/>
<polyline points="921.11,514.40 923.01,512.75 924.91,514.40" fill="none" stroke="#3a84d4" stroke-width="1" stroke-linejoin="round"/>
<rect x="921.21" y="514" width="3.2" height="1" fill="#f0902e"/>
<polyline points="930.22,514.40 932.12,512.75 934.02,514.40" fill="none" stroke="#3a84d4" stroke-width="1" stroke-linejoin="round"/>
<rect x="930.32" y="514" width="3.2" height="1" fill="#f0902e"/>
<polyline points="939.33,514.40 941.23,512.75 943.13,514.40" fill="none" stroke="#3a84d4" stroke-width="1" stroke-linejoin="round"/>
<rect x="939.43" y="514" width="3.2" height="1" fill="#f0902e"/>
<polyline points="948.44,514.40 950.34,512.75 952.24,514.40" fill="none" stroke="#3a84d4" stroke-width="1" stroke-linejoin="round"/>
<rect x="948.54" y="514" width="3.2" height="1" fill="#f0902e"/>
<polyline points="957.55,514.40 959.45,512.75 961.35,514.40" fill="none" stroke="#3a84d4" stroke-width="1" stroke-linejoin="round"/>
<rect x="957.65" y="514" width="3.2" height="1" fill="#f0902e"/>
<polyline points="966.66,514.40 968.56,512.75 970.46,514.40" fill="none" stroke="#3a84d4" stroke-width="1" stroke-linejoin="round"/>
<rect x="966.76" y="514" width="3.2" height="1" fill="#f0902e"/>
<polyline points="975.77,514.40 977.67,512.75 979.57,514.40" fill="none" stroke="#3a84d4" stroke-width="1" stroke-linejoin="round"/>
<rect x="975.87" y="514" width="3.2" height="1" fill="#f0902e"/>
<polyline points="984.88,514.40 986.78,512.75 988.68,514.40" fill="none" stroke="#3a84d4" stroke-width="1" stroke-linejoin="round"/>
<rect x="984.98" y="514" width="3.2" height="1" fill="#f0902e"/>
<polyline points="993.99,514.40 995.89,512.75 997.79,514.40" fill="none" stroke="#3a84d4" stroke-width="1" stroke-linejoin="round"/>
<rect x="994.09" y="514" width="3.2" height="1" fill="#f0902e"/>
<polyline points="1003.10,514.40 1005.00,512.75 1006.90,514.40" fill="none" stroke="#3a84d4" stroke-width="1" stroke-linejoin="round"/>
<rect x="1003.20" y="514" width="3.2" height="1" fill="#f0902e"/>
<polyline points="1012.21,514.40 1014.11,512.75 1016.01,514.40" fill="none" stroke="#3a84d4" stroke-width="1" stroke-linejoin="round"/>
<rect x="1012.31" y="514" width="3.2" height="1" fill="#f0902e"/>
<polyline points="1021.32,514.40 1023.22,512.75 1025.12,514.40" fill="none" stroke="#3a84d4" stroke-width="1" stroke-linejoin="round"/>
<rect x="1021.42" y="514" width="3.2" height="1" fill="#f0902e"/>
<polyline points="1030.43,514.40 1032.33,512.75 1034.23,514.40" fill="none" stroke="#3a84d4" stroke-width="1" stroke-linejoin="round"/>
<rect x="1030.53" y="514" width="3.2" height="1" fill="#f0902e"/>
<polyline points="1039.54,514.40 1041.44,512.75 1043.34,514.40" fill="none" stroke="#3a84d4" stroke-width="1" stroke-linejoin="round"/>
<rect x="1039.64" y="514" width="3.2" height="1" fill="#f0902e"/>
<polyline points="1048.65,514.40 1050.55,512.75 1052.45,514.40" fill="none" stroke="#3a84d4" stroke-width="1" stroke-linejoin="round"/>
<rect x="1048.75" y="514" width="3.2" height="1" fill="#f0902e"/>
<polyline points="1057.76,514.40 1059.66,512.75 1061.56,514.40" fill="none" stroke="#3a84d4" stroke-width="1" stroke-linejoin="round"/>
<rect x="1057.86" y="514" width="3.2" height="1" fill="#f0902e"/>
<polyline points="1066.87,514.40 1068.77,512.75 1070.67,514.40" fill="none" stroke="#3a84d4" stroke-width="1" stroke-linejoin="round"/>
<rect x="1066.97" y="514" width="3.2" height="1" fill="#f0902e"/>
<polyline points="1075.98,514.40 1077.88,512.75 1079.78,514.40" fill="none" stroke="#3a84d4" stroke-width="1" stroke-linejoin="round"/>
<rect x="1076.08" y="514" width="3.2" height="1" fill="#f0902e"/>
<polyline points="1085.09,514.40 1086.99,512.75 1088.89,514.40" fill="none" stroke="#3a84d4" stroke-width="1" stroke-linejoin="round"/>
<rect x="1085.19" y="514" width="3.2" height="1" fill="#f0902e"/>
<polyline points="1094.20,514.40 1096.10,512.75 1098.00,514.40" fill="none" stroke="#3a84d4" stroke-width="1" stroke-linejoin="round"/>
<rect x="1094.30" y="514" width="3.2" height="1" fill="#f0902e"/>
<polyline points="1103.31,514.40 1105.21,512.75 1107.11,514.40" fill="none" stroke="#3a84d4" stroke-width="1" stroke-linejoin="round"/>
<rect x="1103.41" y="514" width="3.2" height="1" fill="#f0902e"/>
<polyline points="1112.42,514.40 1114.32,512.75 1116.22,514.40" fill="none" stroke="#3a84d4" stroke-width="1" stroke-linejoin="round"/>
<rect x="1112.52" y="514" width="3.2" height="1" fill="#f0902e"/>
<polyline points="1121.53,514.40 1123.43,512.75 1125.33,514.40" fill="none" stroke="#3a84d4" stroke-width="1" stroke-linejoin="round"/>
<rect x="1121.63" y="514" width="3.2" height="1" fill="#f0902e"/>
<polyline points="1130.64,514.40 1132.54,512.75 1134.44,514.40" fill="none" stroke="#3a84d4" stroke-width="1" stroke-linejoin="round"/>
<rect x="1130.74" y="514" width="3.2" height="1" fill="#f0902e"/>
<polyline points="1139.75,514.40 1141.65,512.75 1143.55,514.40" fill="none" stroke="#3a84d4" stroke-width="1" stroke-linejoin="round"/>
<rect x="1139.85" y="514" width="3.2" height="1" fill="#f0902e"/>
<polyline points="1148.86,514.40 1150.76,512.75 1152.66,514.40" fill="none" stroke="#3a84d4" stroke-width="1" stroke-linejoin="round"/>
<rect x="1148.96" y="514" width="3.2" height="1" fill="#f0902e"/>
<polyline points="1157.97,514.40 1159.87,512.75 1161.77,514.40" fill="none" stroke="#3a84d4" stroke-width="1" stroke-linejoin="round"/>
<rect x="1158.07" y="514" width="3.2" height="1" fill="#f0902e"/>
<polyline points="1167.08,514.40 1168.98,512.75 1170.88,514.40" fill="none" stroke="#3a84d4" stroke-width="1" stroke-linejoin="round"/>
<rect x="1167.18" y="514" width="3.2" height="1" fill="#f0902e"/>
<polyline points="1176.19,514.40 1178.09,512.75 1179.99,514.40" fill="none" stroke="#3a84d4" stroke-width="1" stroke-linejoin="round"/>
<rect x="1176.29" y="514" width="3.2" height="1" fill="#f0902e"/>
<polyline points="1185.30,514.40 1187.20,512.75 1189.10,514.40" fill="none" stroke="#3a84d4" stroke-width="1" stroke-linejoin="round"/>
<rect x="1185.40" y="514" width="3.2" height="1" fill="#f0902e"/>
<polyline points="1194.41,514.40 1196.31,512.75 1198.21,514.40" fill="none" stroke="#3a84d4" stroke-width="1" stroke-linejoin="round"/>
<rect x="1194.51" y="514" width="3.2" height="1" fill="#f0902e"/>
<polyline points="1203.52,514.40 1205.42,512.75 1207.32,514.40" fill="none" stroke="#3a84d4" stroke-width="1" stroke-linejoin="round"/>
<rect x="1203.62" y="514" width="3.2" height="1" fill="#f0902e"/>
<polyline points="1212.63,514.40 1214.53,512.75 1216.43,514.40" fill="none" stroke="#3a84d4" stroke-width="1" stroke-linejoin="round"/>
<rect x="1212.73" y="514" width="3.2" height="1" fill="#f0902e"/>
<polyline points="1221.74,514.40 1223.64,512.75 1225.54,514.40" fill="none" stroke="#3a84d4" stroke-width="1" stroke-linejoin="round"/>
<rect x="1221.84" y="514" width="3.2" height="1" fill="#f0902e"/>
<polyline points="1230.85,514.40 1232.75,512.75 1234.65,514.40" fill="none" stroke="#3a84d4" stroke-width="1" stroke-linejoin="round"/>
<rect x="1230.95" y="514" width="3.2" height="1" fill="#f0902e"/>
<polyline points="1239.96,514.40 1241.86,512.75 1243.76,514.40" fill="none" stroke="#3a84d4" stroke-width="1" stroke-linejoin="round"/>
<rect x="1240.06" y="514" width="3.2" height="1" fill="#f0902e"/>
<polyline points="1249.07,514.40 1250.97,512.75 1252.87,514.40" fill="none" stroke="#3a84d4" stroke-width="1" stroke-linejoin="round"/>
<rect x="1249.17" y="514" width="3.2" height="1" fill="#f0902e"/>
<polyline points="1258.18,514.40 1260.08,512.75 1261.98,514.40" fill="none" stroke="#3a84d4" stroke-width="1" stroke-linejoin="round"/>
<rect x="1258.28" y="514" width="3.2" height="1" fill="#f0902e"/>
<polyline points="1267.29,514.40 1269.19,512.75 1271.09,514.40" fill="none" stroke="#3a84d4" stroke-width="1" stroke-linejoin="round"/>
<rect x="1267.39" y="514" width="3.2" height="1" fill="#f0902e"/>
<polyline points="1276.40,514.40 1278.30,512.75 1280.20,514.40" fill="none" stroke="#3a84d4" stroke-width="1" stroke-linejoin="round"/>
<rect x="1276.50" y="514" width="3.2" height="1" fill="#f0902e"/>
<polyline points="1285.51,514.40 1287.41,512.75 1289.31,514.40" fill="none" stroke="#3a84d4" stroke-width="1" stroke-linejoin="round"/>
<rect x="1285.61" y="514" width="3.2" height="1" fill="#f0902e"/>
<polyline points="1294.62,514.40 1296.52,512.75 1298.42,514.40" fill="none" stroke="#3a84d4" stroke-width="1" stroke-linejoin="round"/>
<rect x="1294.72" y="514" width="3.2" height="1" fill="#f0902e"/>
<polyline points="1303.73,514.40 1305.63,512.75 1307.53,514.40" fill="none" stroke="#3a84d4" stroke-width="1" stroke-linejoin="round"/>
<rect x="1303.83" y="514" width="3.2" height="1" fill="#f0902e"/>
<polyline points="1312.84,514.40 1314.74,512.75 1316.64,514.40" fill="none" stroke="#3a84d4" stroke-width="1" stroke-linejoin="round"/>
<rect x="1312.94" y="514" width="3.2" height="1" fill="#f0902e"/>
<polyline points="1321.95,514.40 1323.85,512.75 1325.75,514.40" fill="none" stroke="#3a84d4" stroke-width="1" stroke-linejoin="round"/>
<rect x="1322.05" y="514" width="3.2" height="1" fill="#f0902e"/>
<polyline points="1331.06,514.40 1332.96,512.75 1334.86,514.40" fill="none" stroke="#3a84d4" stroke-width="1" stroke-linejoin="round"/>
<rect x="1331.16" y="514" width="3.2" height="1" fill="#f0902e"/>
<polyline points="1340.17,514.40 1342.07,512.75 1343.97,514.40" fill="none" stroke="#3a84d4" stroke-width="1" stroke-linejoin="round"/>
<rect x="1340.27" y="514" width="3.2" height="1" fill="#f0902e"/>
<polyline points="1349.28,514.40 1351.18,512.75 1353.08,514.40" fill="none" stroke="#3a84d4" stroke-width="1" stroke-linejoin="round"/>
<rect x="1349.38" y="514" width="3.2" height="1" fill="#f0902e"/>
<polyline points="1358.39,514.40 1360.29,512.75 1362.19,514.40" fill="none" stroke="#3a84d4" stroke-width="1" stroke-linejoin="round"/>
<rect x="1358.49" y="514" width="3.2" height="1" fill="#f0902e"/>
<polyline points="1367.50,514.40 1369.40,512.75 1371.30,514.40" fill="none" stroke="#3a84d4" stroke-width="1" stroke-linejoin="round"/>
<rect x="1367.60" y="514" width="3.2" height="1" fill="#f0902e"/>
<polyline points="1376.61,514.40 1378.51,512.75 1380.41,514.40" fill="none" stroke="#3a84d4" stroke-width="1" stroke-linejoin="round"/>
<rect x="1376.71" y="514" width="3.2" height="1" fill="#f0902e"/>
<polyline points="1385.72,514.40 1387.62,512.75 1389.52,514.40" fill="none" stroke="#3a84d4" stroke-width="1" stroke-linejoin="round"/>
<rect x="1385.82" y="514" width="3.2" height="1" fill="#f0902e"/>
<polyline points="1394.83,514.40 1396.73,512.75 1398.63,514.40" fill="none" stroke="#3a84d4" stroke-width="1" stroke-linejoin="round"/>
<rect x="1394.93" y="514" width="3.2" height="1" fill="#f0902e"/>
<polyline points="1403.94,514.40 1405.84,512.75 1407.74,514.40" fill="none" stroke="#3a84d4" stroke-width="1" stroke-linejoin="round"/>
<rect x="1404.04" y="514" width="3.2" height="1" fill="#f0902e"/>
<polyline points="1413.05,514.40 1414.95,512.75 1416.85,514.40" fill="none" stroke="#3a84d4" stroke-width="1" stroke-linejoin="round"/>
<rect x="1413.15" y="514" width="3.2" height="1" fill="#f0902e"/>
<polyline points="1422.16,514.40 1424.06,512.75 1425.96,514.40" fill="none" stroke="#3a84d4" stroke-width="1" stroke-linejoin="round"/>
<rect x="1422.26" y="514" width="3.2" height="1" fill="#f0902e"/>
<polyline points="1431.27,514.40 1433.17,512.75 1435.07,514.40" fill="none" stroke="#3a84d4" stroke-width="1" stroke-linejoin="round"/>
<rect x="1431.37" y="514" width="3.2" height="1" fill="#f0902e"/>
<polyline points="1440.38,514.40 1442.28,512.75 1444.18,514.40" fill="none" stroke="#3a84d4" stroke-width="1" stroke-linejoin="round"/>
<rect x="1440.48" y="514" width="3.2" height="1" fill="#f0902e"/>
<polyline points="1449.00,514.40 1454.50,510.30 1455.60,514.40" fill="none" stroke="#3a84d4" stroke-width="1" stroke-linejoin="round"/>
<rect x="1449.59" y="514" width="3.2" height="1" fill="#f0902e"/>
<polyline points="1458.60,514.40 1460.50,512.75 1462.40,514.40" fill="none" stroke="#3a84d4" stroke-width="1" stroke-linejoin="round"/>
<rect x="1458.70" y="514" width="3.2" height="1" fill="#f0902e"/>
<polyline points="1467.71,514.40 1469.61,512.75 1471.51,514.40" fill="none" stroke="#3a84d4" stroke-width="1" stroke-linejoin="round"/>
<rect x="1467.81" y="514" width="3.2" height="1" fill="#f0902e"/>
<polyline points="820.00,470.43 821.98,472.81 824.62,474.40 829.24,474.40 831.88,471.49 833.86,473.08 837.82,473.08 841.12,470.43 843.10,472.15 849.70,472.15 852.34,473.87 856.30,473.47 858.02,470.83 859.60,472.15 864.88,472.15 867.26,469.91 868.84,471.23 875.45,471.23 878.75,473.87 884.03,473.87 887.72,470.83 889.97,472.55 893.27,472.55 896.57,470.43 898.55,471.49 902.51,471.49 907.13,474.40 911.75,473.87 913.47,471.23 915.05,472.55 920.33,472.55 922.44,469.91 924.29,471.49 929.57,471.49 932.21,473.08 933.53,472.15 935.51,473.87 938.15,473.87 942.11,471.23 944.09,472.15 946.73,472.15 950.30,469.51 952.67,471.23 957.29,471.23 958.61,473.87 960.59,472.81 963.23,474.79 965.87,474.40 969.17,471.49 971.82,472.81 975.12,472.81 978.42,470.43 980.40,471.49 984.36,471.49 986.34,472.81 987.66,472.02 990.30,473.60 992.94,473.08 995.84,470.70 997.95,472.15 1002.18,472.15 1004.55,469.51 1006.80,471.23 1011.42,471.23 1014.06,474.13 1015.26,470.43 1017.24,472.81 1019.88,474.40 1024.50,474.40 1027.14,471.49 1029.12,473.08 1033.08,473.08 1036.38,470.43 1038.36,472.15 1044.96,472.15 1047.60,473.87 1051.56,473.47 1053.28,470.83 1054.86,472.15 1060.14,472.15 1062.52,469.91 1064.10,471.23 1070.70,471.23 1074.01,473.87 1079.29,473.87 1082.98,470.83 1085.23,472.55 1088.53,472.55 1091.83,470.43 1093.81,471.49 1097.77,471.49 1102.39,474.40 1107.01,473.87 1108.72,471.23 1110.31,472.55 1115.59,472.55 1117.70,469.91 1119.55,471.49 1124.83,471.49 1127.47,473.08 1128.79,472.15 1130.77,473.87 1133.41,473.87 1137.37,471.23 1139.35,472.15 1141.99,472.15 1145.56,469.51 1147.93,471.23 1152.55,471.23 1153.87,473.87 1155.85,472.81 1158.49,474.79 1161.13,474.40 1164.43,471.49 1167.07,472.81 1170.37,472.81 1173.68,470.43 1175.66,471.49 1179.62,471.49 1181.60,472.81 1182.92,472.02 1185.56,473.60 1188.20,473.08 1191.10,470.70 1193.21,472.15 1197.44,472.15 1199.81,469.51 1202.06,471.23 1206.68,471.23 1209.32,474.13 1210.52,470.43 1212.50,472.81 1215.14,474.40 1219.76,474.40 1222.40,471.49 1224.38,473.08 1228.34,473.08 1231.64,470.43 1233.62,472.15 1240.22,472.15 1242.86,473.87 1246.82,473.47 1248.54,470.83 1250.12,472.15 1255.40,472.15 1257.78,469.91 1259.36,471.23 1265.96,471.23 1269.26,473.87 1274.55,473.87 1278.24,470.83 1280.49,472.55 1283.79,472.55 1287.09,470.43 1289.07,471.49 1293.03,471.49 1297.65,474.40 1302.27,473.87 1303.98,471.23 1305.57,472.55 1310.85,472.55 1312.96,469.91 1314.81,471.49 1320.09,471.49 1322.73,473.08 1324.05,472.15 1326.03,473.87 1328.67,473.87 1332.63,471.23 1334.61,472.15 1337.25,472.15 1340.82,469.51 1343.19,471.23 1347.81,471.23 1349.13,473.87 1351.11,472.81 1353.75,474.79 1356.39,474.40 1359.69,471.49 1362.33,472.81 1365.63,472.81 1368.93,470.43 1370.91,471.49 1374.88,471.49 1376.86,472.81 1378.18,472.02 1380.82,473.60 1383.46,473.08 1386.36,470.70 1388.47,472.15 1392.70,472.15 1395.07,469.51 1397.32,471.23 1401.94,471.23 1404.58,474.13 1405.78,470.43 1407.76,472.81 1410.40,474.40 1415.02,474.40 1417.66,471.49 1419.64,473.08 1423.60,473.08 1426.90,470.43 1428.88,472.15 1435.48,472.15 1438.12,473.87 1442.08,473.47 1443.80,470.83 1445.38,472.15 1450.50,471.60 1451.50,467.40 1454.80,467.40 1456.00,471.90 1458.50,471.60 1460.50,468.60 1463.00,470.40 1467.00,470.40 1469.00,469.20 1476.00,468.90" fill="none" stroke="#BA43A9" stroke-width="1" stroke-linejoin="round"/>
<polyline points="820.00,470.43 821.98,472.81 824.62,474.40 829.24,474.40 831.88,471.49 833.86,473.08 837.82,473.08 841.12,470.43 843.10,472.15 849.70,472.15 852.34,473.87 856.30,473.47 858.02,470.83 859.60,472.15 864.88,472.15 867.26,469.91 868.84,471.23 875.45,471.23 878.75,473.87 884.03,473.87 887.72,470.83 889.97,472.55 893.27,472.55 896.57,470.43 898.55,471.49 902.51,471.49 907.13,474.40 911.75,473.87 913.47,471.23 915.05,472.55 920.33,472.55 922.44,469.91 924.29,471.49 929.57,471.49 932.21,473.08 933.53,472.15 935.51,473.87 938.15,473.87 942.11,471.23 944.09,472.15 946.73,472.15 950.30,469.51 952.67,471.23 957.29,471.23 958.61,473.87 960.59,472.81 963.23,474.79 965.87,474.40 969.17,471.49 971.82,472.81 975.12,472.81 978.42,470.43 980.40,471.49 984.36,471.49 986.34,472.81 987.66,472.02 990.30,473.60 992.94,473.08 995.84,470.70 997.95,472.15 1002.18,472.15 1004.55,469.51 1006.80,471.23 1011.42,471.23 1014.06,474.13 1015.26,470.43 1017.24,472.81 1019.88,474.40 1024.50,474.40 1027.14,471.49 1029.12,473.08 1033.08,473.08 1036.38,470.43 1038.36,472.15 1044.96,472.15 1047.60,473.87 1051.56,473.47 1053.28,470.83 1054.86,472.15 1060.14,472.15 1062.52,469.91 1064.10,471.23 1070.70,471.23 1074.01,473.87 1079.29,473.87 1082.98,470.83 1085.23,472.55 1088.53,472.55 1091.83,470.43 1093.81,471.49 1097.77,471.49 1102.39,474.40 1107.01,473.87 1108.72,471.23 1110.31,472.55 1115.59,472.55 1117.70,469.91 1119.55,471.49 1124.83,471.49 1127.47,473.08 1128.79,472.15 1130.77,473.87 1133.41,473.87 1137.37,471.23 1139.35,472.15 1141.99,472.15 1145.56,469.51 1147.93,471.23 1152.55,471.23 1153.87,473.87 1155.85,472.81 1158.49,474.79 1161.13,474.40 1164.43,471.49 1167.07,472.81 1170.37,472.81 1173.68,470.43 1175.66,471.49 1179.62,471.49 1181.60,472.81 1182.92,472.02 1185.56,473.60 1188.20,473.08 1191.10,470.70 1193.21,472.15 1197.44,472.15 1199.81,469.51 1202.06,471.23 1206.68,471.23 1209.32,474.13 1210.52,470.43 1212.50,472.81 1215.14,474.40 1219.76,474.40 1222.40,471.49 1224.38,473.08 1228.34,473.08 1231.64,470.43 1233.62,472.15 1240.22,472.15 1242.86,473.87 1246.82,473.47 1248.54,470.83 1250.12,472.15 1255.40,472.15 1257.78,469.91 1259.36,471.23 1265.96,471.23 1269.26,473.87 1274.55,473.87 1278.24,470.83 1280.49,472.55 1283.79,472.55 1287.09,470.43 1289.07,471.49 1293.03,471.49 1297.65,474.40 1302.27,473.87 1303.98,471.23 1305.57,472.55 1310.85,472.55 1312.96,469.91 1314.81,471.49 1320.09,471.49 1322.73,473.08 1324.05,472.15 1326.03,473.87 1328.67,473.87 1332.63,471.23 1334.61,472.15 1337.25,472.15 1340.82,469.51 1343.19,471.23 1347.81,471.23 1349.13,473.87 1351.11,472.81 1353.75,474.79 1356.39,474.40 1359.69,471.49 1362.33,472.81 1365.63,472.81 1368.93,470.43 1370.91,471.49 1374.88,471.49 1376.86,472.81 1378.18,472.02 1380.82,473.60 1383.46,473.08 1386.36,470.70 1388.47,472.15 1392.70,472.15 1395.07,469.51 1397.32,471.23 1401.94,471.23 1404.58,474.13 1405.78,470.43 1407.76,472.81 1410.40,474.40 1415.02,474.40 1417.66,471.49 1419.64,473.08 1423.60,473.08 1426.90,470.43 1428.88,472.15 1435.48,472.15 1438.12,473.87 1442.08,473.47 1443.80,470.83 1445.38,472.15 1450.50,471.60 1451.50,467.40 1454.80,467.40 1456.00,471.90 1458.50,471.60 1460.50,468.60 1463.00,470.40 1467.00,470.40 1469.00,469.20 1476.00,468.90" fill="none" stroke="#705DA0" stroke-opacity="0.55" stroke-width="1" stroke-linejoin="round"/>
</svg>
<div class="axis y"><span class="t" style="left:11.80px;top:39.04px;letter-spacing:-0.163px">191 MiB</span><span class="t" style="left:11.80px;top:54.04px;letter-spacing:-0.163px">143 MiB</span><span class="t" style="left:8.96px;top:68.04px;letter-spacing:-0.206px">95.4 MiB</span><span class="t" style="left:9.37px;top:82.04px;letter-spacing:-0.265px">47.7 MiB</span><span class="t" style="left:38.12px;top:96.04px;letter-spacing:-0.648px">0 B</span></div>
<div class="axis x"><span class="t" style="left:114.81px;top:110.04px;letter-spacing:-0.171px">22:00</span><span class="t" style="left:224.97px;top:110.04px;letter-spacing:-0.211px">00:00</span><span class="t" style="left:333.97px;top:110.04px;letter-spacing:-0.211px">02:00</span><span class="t" style="left:442.97px;top:110.04px;letter-spacing:-0.211px">04:00</span><span class="t" style="left:552.97px;top:110.04px;letter-spacing:-0.211px">06:00</span><span class="t" style="left:661.97px;top:110.04px;letter-spacing:-0.211px">08:00</span></div>
<div class="legend">
<div class="series"><i class="ic" style="left:18px;top:138px;background:#7EB26D"></i><span class="t alias" style="left:40.25px;top:134.04px;letter-spacing:-0.027px">code</span><span class="t value" style="left:72.54px;top:134.04px;letter-spacing:-0.107px">Current: 2.65 MiB</span></div>
<div class="series"><i class="ic" style="left:175px;top:138px;background:#EAB839"></i><span class="t alias" style="left:196.75px;top:134.04px;letter-spacing:-0.135px">code_large_object</span><span class="t value" style="left:299.34px;top:134.04px;letter-spacing:-0.136px">Current: 532 KiB</span></div>
<div class="series"><i class="ic" style="left:396px;top:138px;background:#6ED0E0"></i><span class="t alias" style="left:417.81px;top:134.04px;letter-spacing:-0.085px">large_object</span><span class="t value" style="left:488.74px;top:134.04px;letter-spacing:-0.095px">Current: 22.5 MiB</span></div>
<div class="series"><i class="ic" style="left:18px;top:156px;background:#EF843C"></i><span class="t alias" style="left:39.90px;top:152.04px;letter-spacing:-0.100px">map</span><span class="t value" style="left:69.54px;top:152.04px;letter-spacing:-0.076px">Current: 2.44 MiB</span></div>
<div class="series"><i class="ic" style="left:172px;top:156px;background:#E24D42"></i><span class="t alias" style="left:193.90px;top:152.04px;letter-spacing:-0.200px">new</span><span class="t value" style="left:222.24px;top:152.04px;letter-spacing:-0.143px">Current: 679 KiB</span></div>
<div class="series"><i class="ic" style="left:319px;top:156px;background:#1F78C1"></i><span class="t alias" style="left:340.50px;top:152.04px;letter-spacing:-0.133px">new_large_object</span><span class="t value" style="left:439.34px;top:152.04px;letter-spacing:-0.195px">Current: 0 B</span></div>
<div class="series"><i class="ic" style="left:512px;top:156px;background:#BA43A9"></i><span class="t alias" style="left:533.77px;top:152.04px;letter-spacing:0.307px">old</span><span class="t value" style="left:556.24px;top:152.04px;letter-spacing:-0.083px">Current: 152 MiB</span></div>
<div class="clip">
<div class="series"><i class="ic" style="left:18px;top:9px;background:#705DA0"></i><span class="t alias" style="left:39.90px;top:5.04px;letter-spacing:-0.012px">read_only</span><span class="t value" style="left:99.44px;top:5.04px;letter-spacing:-0.349px">Current: 147 KiB</span></div>
</div>
</div>
</section>
</body></html>
